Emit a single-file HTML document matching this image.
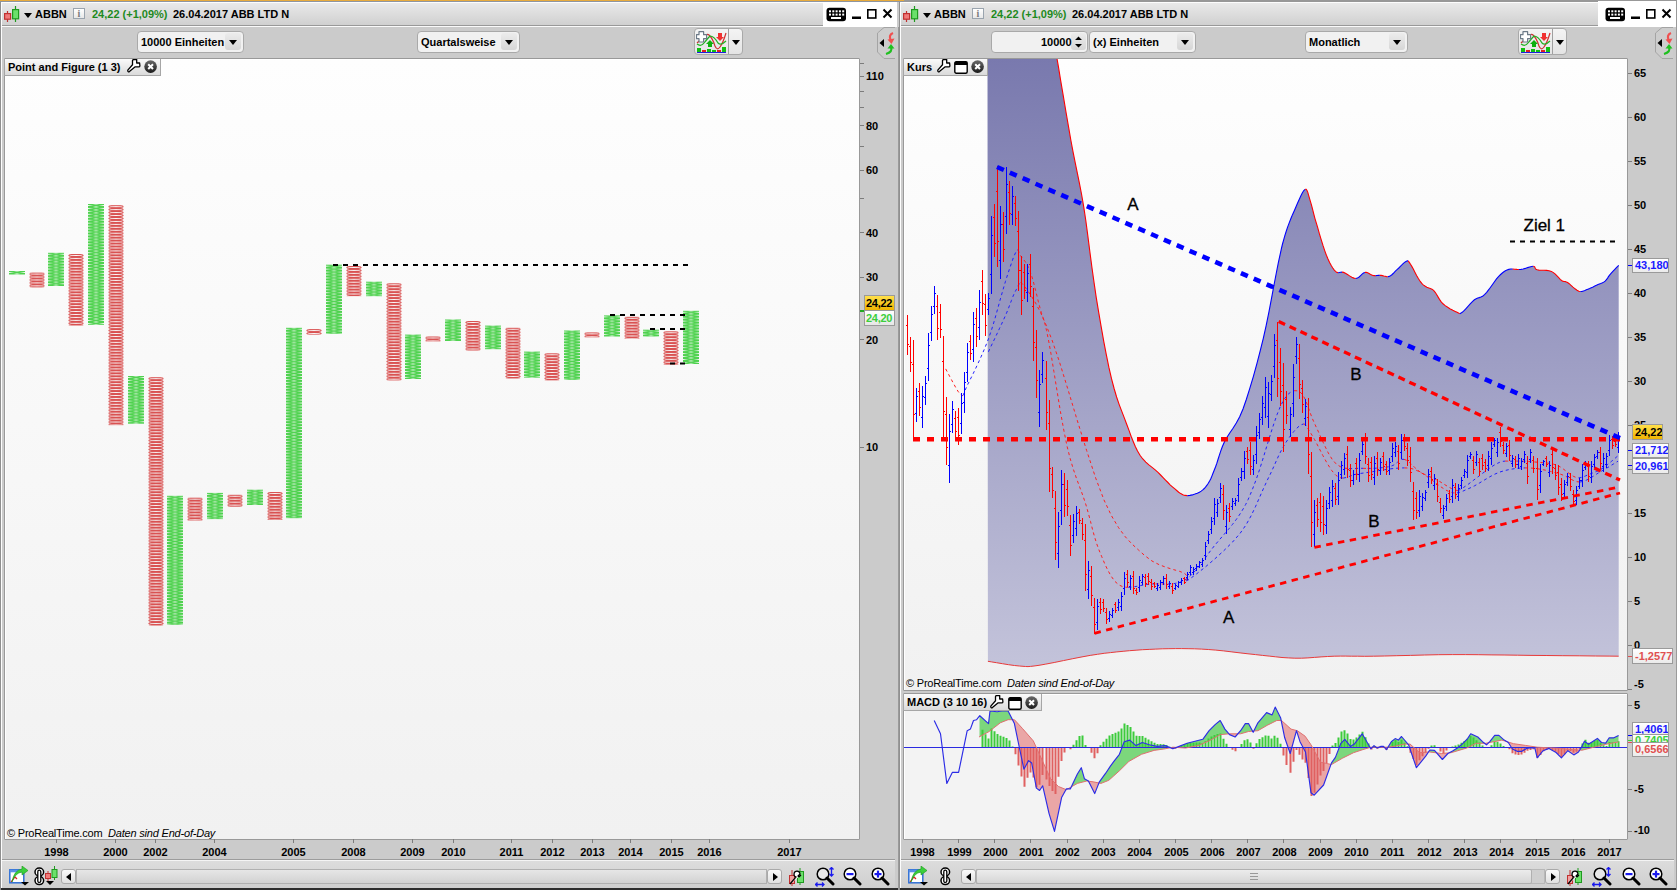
<!DOCTYPE html><html><head><meta charset="utf-8"><style>body{margin:0;width:1677px;height:890px;overflow:hidden;position:relative;background:#cbcbcb;font-family:"Liberation Sans", sans-serif;}div{box-sizing:border-box}svg{position:absolute;left:0;top:0}</style></head><body>
<div style="position:absolute;left:0px;top:0px;width:898px;height:890px;background:#cbcbcb"></div>
<div style="position:absolute;left:0px;top:0px;width:898px;height:2px;background:linear-gradient(#e8ab3c 50%,#8e95a0 50%)"></div>
<div style="position:absolute;left:1px;top:2px;width:822px;height:1px;background:#fdfdfd"></div>
<div style="position:absolute;left:1px;top:3px;width:822px;height:22px;background:linear-gradient(#e9e9e9,#d0d0d0)"></div>
<div style="position:absolute;left:1px;top:25px;width:896px;height:1px;background:#999"></div>
<div style="position:absolute;left:1px;top:26px;width:896px;height:1px;background:#fafafa"></div>
<div style="position:absolute;left:823px;top:1px;width:74px;height:26px;background:#fff"></div>
<div style="position:absolute;left:0px;top:888px;width:898px;height:2px;background:#2d2d2d"></div>
<div style="position:absolute;left:1px;top:859px;width:894px;height:1px;background:#9c9c9c"></div>
<div style="position:absolute;left:1px;top:860px;width:894px;height:1px;background:#f4f4f4"></div>
<div style="position:absolute;left:1px;top:861px;width:894px;height:27px;background:linear-gradient(#dcdcdc,#cfcfcf)"></div>
<div style="position:absolute;left:0px;top:0px;width:1px;height:890px;background:#8f8f8f"></div>
<div style="position:absolute;left:1px;top:2px;width:1px;height:886px;background:#fdfdfd"></div>
<div style="position:absolute;left:898px;top:27px;width:1px;height:863px;background:#9a9a9a"></div>
<div style="position:absolute;left:899px;top:1px;width:1px;height:889px;background:#909090"></div>
<div style="position:absolute;left:900px;top:0px;width:777px;height:890px;background:#cbcbcb"></div>
<div style="position:absolute;left:900px;top:0px;width:777px;height:2px;background:#989898"></div>
<div style="position:absolute;left:901px;top:2px;width:697px;height:1px;background:#fdfdfd"></div>
<div style="position:absolute;left:901px;top:3px;width:697px;height:22px;background:linear-gradient(#e9e9e9,#d0d0d0)"></div>
<div style="position:absolute;left:901px;top:25px;width:775px;height:1px;background:#999"></div>
<div style="position:absolute;left:901px;top:26px;width:775px;height:1px;background:#fafafa"></div>
<div style="position:absolute;left:1598px;top:1px;width:78px;height:26px;background:#fff"></div>
<div style="position:absolute;left:900px;top:888px;width:777px;height:2px;background:#2d2d2d"></div>
<div style="position:absolute;left:901px;top:859px;width:773px;height:1px;background:#9c9c9c"></div>
<div style="position:absolute;left:901px;top:860px;width:773px;height:1px;background:#f4f4f4"></div>
<div style="position:absolute;left:901px;top:861px;width:773px;height:27px;background:linear-gradient(#dcdcdc,#cfcfcf)"></div>
<div style="position:absolute;left:900px;top:2px;width:1px;height:886px;background:#fdfdfd"></div>
<div style="position:absolute;left:1676px;top:0px;width:1px;height:890px;background:#9a9a9a"></div>
<div style="position:absolute;left:0px;top:0px;width:904px;height:2px;background:linear-gradient(#e8ab3c 50%,#8e95a0 50%)"></div>
<div style="position:absolute;left:4px;top:58px;width:856px;height:782px;background:linear-gradient(#fefefe,#f1f1f1);border:1px solid #999;border-radius:1px;box-shadow:inset 1px 1px 0 #fff"></div>
<div style="position:absolute;left:903px;top:58px;width:725px;height:633px;background:linear-gradient(#fefefe,#f1f1f1);border:1px solid #999;border-radius:1px;box-shadow:inset 1px 1px 0 #fff"></div>
<div style="position:absolute;left:903px;top:693px;width:725px;height:147px;background:#f3f3f3;border:1px solid #999;border-radius:1px;box-shadow:inset 1px 1px 0 #fff"></div>
<svg style="left:0px;top:0px" width="20" height="24" viewBox="0 0 20 24"><path d="M7.5,11V22" stroke="#c03030" stroke-width="1.2"/><rect x="4.6" y="13.6" width="6" height="5.6" fill="#f07a7a" stroke="#c03030" stroke-width="1.2"/><path d="M15.5,6V22" stroke="#1f9a1f" stroke-width="1.2"/><rect x="12.6" y="9.6" width="6" height="9.2" fill="#6be06b" stroke="#1f9a1f" stroke-width="1.2"/></svg>
<svg style="left:24px;top:13px" width="8" height="5" viewBox="0 0 8 5"><path d="M0,0H8L4.0,5Z" fill="#000"/></svg>
<div style="position:absolute;left:35px;top:9px;font-size:11px;font-weight:bold;color:#000;white-space:nowrap;line-height:1;">ABBN</div>
<div style="position:absolute;left:73px;top:8px;width:12px;height:11px;border:1px solid #9aa4ae;background:linear-gradient(#fff,#e8e8e8);font-family:'Liberation Serif';font-weight:bold;font-size:10px;line-height:9px;text-align:center;color:#7a7a7a">i</div>
<div style="position:absolute;left:92px;top:9px;font-size:11px;font-weight:bold;color:#1e8a1e;white-space:nowrap;line-height:1;">24,22 (+1,09%)</div>
<div style="position:absolute;left:173px;top:9px;font-size:11px;font-weight:bold;color:#000;white-space:nowrap;line-height:1;">26.04.2017 ABB LTD N</div>
<svg style="left:826px;top:7px" width="68" height="16" viewBox="0 0 68 16"><rect x="0.5" y="0.8" width="19.5" height="13.5" rx="3" fill="#000"/><rect x="3.0" y="3.3" width="2" height="2" fill="#fff"/><rect x="3.0" y="6.6" width="2" height="2" fill="#fff"/><rect x="6.3" y="3.3" width="2" height="2" fill="#fff"/><rect x="6.3" y="6.6" width="2" height="2" fill="#fff"/><rect x="9.6" y="3.3" width="2" height="2" fill="#fff"/><rect x="9.6" y="6.6" width="2" height="2" fill="#fff"/><rect x="12.9" y="3.3" width="2" height="2" fill="#fff"/><rect x="12.9" y="6.6" width="2" height="2" fill="#fff"/><rect x="16.2" y="3.3" width="2" height="2" fill="#fff"/><rect x="16.2" y="6.6" width="2" height="2" fill="#fff"/><rect x="5" y="10" width="10" height="2" fill="#fff"/><rect x="26" y="9.5" width="9" height="2.5" fill="#000"/><rect x="41.8" y="2.8" width="8" height="8.2" fill="none" stroke="#000" stroke-width="1.6"/><path d="M57.5,2.5L65.5,10.5M65.5,2.5L57.5,10.5" stroke="#000" stroke-width="2"/></svg>
<svg style="left:899px;top:0px" width="20" height="24" viewBox="0 0 20 24"><path d="M7.5,11V22" stroke="#c03030" stroke-width="1.2"/><rect x="4.6" y="13.6" width="6" height="5.6" fill="#f07a7a" stroke="#c03030" stroke-width="1.2"/><path d="M15.5,6V22" stroke="#1f9a1f" stroke-width="1.2"/><rect x="12.6" y="9.6" width="6" height="9.2" fill="#6be06b" stroke="#1f9a1f" stroke-width="1.2"/></svg>
<svg style="left:923px;top:13px" width="8" height="5" viewBox="0 0 8 5"><path d="M0,0H8L4.0,5Z" fill="#000"/></svg>
<div style="position:absolute;left:934px;top:9px;font-size:11px;font-weight:bold;color:#000;white-space:nowrap;line-height:1;">ABBN</div>
<div style="position:absolute;left:972px;top:8px;width:12px;height:11px;border:1px solid #9aa4ae;background:linear-gradient(#fff,#e8e8e8);font-family:'Liberation Serif';font-weight:bold;font-size:10px;line-height:9px;text-align:center;color:#7a7a7a">i</div>
<div style="position:absolute;left:991px;top:9px;font-size:11px;font-weight:bold;color:#1e8a1e;white-space:nowrap;line-height:1;">24,22 (+1,09%)</div>
<div style="position:absolute;left:1072px;top:9px;font-size:11px;font-weight:bold;color:#000;white-space:nowrap;line-height:1;">26.04.2017 ABB LTD N</div>
<svg style="left:1605px;top:7px" width="68" height="16" viewBox="0 0 68 16"><rect x="0.5" y="0.8" width="19.5" height="13.5" rx="3" fill="#000"/><rect x="3.0" y="3.3" width="2" height="2" fill="#fff"/><rect x="3.0" y="6.6" width="2" height="2" fill="#fff"/><rect x="6.3" y="3.3" width="2" height="2" fill="#fff"/><rect x="6.3" y="6.6" width="2" height="2" fill="#fff"/><rect x="9.6" y="3.3" width="2" height="2" fill="#fff"/><rect x="9.6" y="6.6" width="2" height="2" fill="#fff"/><rect x="12.9" y="3.3" width="2" height="2" fill="#fff"/><rect x="12.9" y="6.6" width="2" height="2" fill="#fff"/><rect x="16.2" y="3.3" width="2" height="2" fill="#fff"/><rect x="16.2" y="6.6" width="2" height="2" fill="#fff"/><rect x="5" y="10" width="10" height="2" fill="#fff"/><rect x="26" y="9.5" width="9" height="2.5" fill="#000"/><rect x="41.8" y="2.8" width="8" height="8.2" fill="none" stroke="#000" stroke-width="1.6"/><path d="M57.5,2.5L65.5,10.5M65.5,2.5L57.5,10.5" stroke="#000" stroke-width="2"/></svg>
<div style="position:absolute;left:137px;top:31px;width:107px;height:22px;border:1px solid #a9a9a9;border-radius:4px;background:#f1f1f1"></div>
<div style="position:absolute;left:225px;top:33px;width:16px;height:17px;border-radius:3px;background:linear-gradient(#ececec,#d6d6d6)"></div>
<svg style="left:229px;top:40px" width="8" height="5" viewBox="0 0 8 5"><path d="M0,0H8L4.0,5Z" fill="#000"/></svg>
<div style="position:absolute;left:141px;top:37px;font-size:11px;font-weight:bold;color:#000;white-space:nowrap;line-height:1;">10000 Einheiten</div>
<div style="position:absolute;left:417px;top:31px;width:103px;height:22px;border:1px solid #a9a9a9;border-radius:4px;background:#f1f1f1"></div>
<div style="position:absolute;left:501px;top:33px;width:16px;height:17px;border-radius:3px;background:linear-gradient(#ececec,#d6d6d6)"></div>
<svg style="left:505px;top:40px" width="8" height="5" viewBox="0 0 8 5"><path d="M0,0H8L4.0,5Z" fill="#000"/></svg>
<div style="position:absolute;left:421px;top:37px;font-size:11px;font-weight:bold;color:#000;white-space:nowrap;line-height:1;">Quartalsweise</div>
<div style="position:absolute;left:694px;top:28px;width:49px;height:27px;border:1px solid #a9a9a9;border-radius:4px;background:linear-gradient(#f4f4f4,#e4e4e4)"></div>
<div style="position:absolute;left:728px;top:29px;width:1px;height:25px;background:#a0a0a0"></div>
<svg style="left:732px;top:40px" width="8" height="5" viewBox="0 0 8 5"><path d="M0,0H8L4.0,5Z" fill="#000"/></svg>
<svg style="left:696px;top:31px" width="31" height="22" viewBox="0 0 31 22"><path d="M1,12 Q5,8 8,6 Q11,2 13,4 Q17,8 19,15 Q21,20 24,16 Q27,12 30,2" fill="none" stroke="#d03030" stroke-width="1.2"/><path d="M1,13 Q5,16 8,12 Q12,7 14,5 Q18,5 22,12 Q25,15 30,10" fill="none" stroke="#20b020" stroke-width="1.2"/><path d="M12,16h4v-3h2l-4-4l-4,4h2z" fill="#10b010"/><path d="M22,2h4v4h2l-4,4l-4-4h2z" fill="#f03030"/><rect x="1" y="17" width="4" height="4" fill="#10c010"/><rect x="6" y="19" width="4" height="2" fill="#e02020"/><rect x="11" y="18" width="4" height="3" fill="#10c010"/><rect x="16" y="19" width="4" height="2" fill="#10c010"/><rect x="21" y="19" width="4" height="2" fill="#e02020"/><rect x="26" y="16" width="4" height="5" fill="#10c010"/><rect x="1" y="21" width="29" height="1.2" fill="#2020e0"/><path d="M3,0.7h4.6v3h3v4h-3v3.3h-4.6v-3.3h-2.5v-4h2.5z" fill="#fff" stroke="#6c7a88" stroke-width="1.2" stroke-linejoin="round"/></svg>
<svg style="left:876px;top:27px" width="19" height="32" viewBox="0 0 19 32"><path d="M19.5,0.5H8L1.5,6V25L8,31.5H19.5" fill="#cdcdcd" stroke="#a4a4a4" stroke-width="1"/><path d="M3.5,16L8,12V20Z" fill="#000"/><path d="M17,6 Q12,8 15,14" fill="none" stroke="#f05050" stroke-width="2.2"/><path d="M11.5,12.5L15.5,17L18.5,11.5Z" fill="#f05050"/><path d="M15,17 L11.5,21.5 L18.5,21.5Z" fill="#20c020"/><path d="M15,20 Q17,25 10,27" fill="none" stroke="#20c020" stroke-width="2.2"/></svg>
<div style="position:absolute;left:991px;top:31px;width:97px;height:22px;border:1px solid #a9a9a9;border-radius:4px;background:#f1f1f1"></div>
<div style="position:absolute;left:1071px;top:33px;width:15px;height:17px;border-radius:3px;background:linear-gradient(#ececec,#d6d6d6)"></div>
<svg style="left:1074px;top:35px" width="9" height="14" viewBox="0 0 9 14"><path d="M1,5H8L4.5,1.5Z M1,9H8L4.5,12.5Z" fill="#000"/></svg>
<div style="position:absolute;left:1041px;top:37px;font-size:11px;font-weight:bold;color:#000;white-space:nowrap;line-height:1;">10000</div>
<div style="position:absolute;left:1089px;top:31px;width:107px;height:22px;border:1px solid #a9a9a9;border-radius:4px;background:#f1f1f1"></div>
<div style="position:absolute;left:1177px;top:33px;width:16px;height:17px;border-radius:3px;background:linear-gradient(#ececec,#d6d6d6)"></div>
<svg style="left:1181px;top:40px" width="8" height="5" viewBox="0 0 8 5"><path d="M0,0H8L4.0,5Z" fill="#000"/></svg>
<div style="position:absolute;left:1093px;top:37px;font-size:11px;font-weight:bold;color:#000;white-space:nowrap;line-height:1;">(x) Einheiten</div>
<div style="position:absolute;left:1305px;top:31px;width:103px;height:22px;border:1px solid #a9a9a9;border-radius:4px;background:#f1f1f1"></div>
<div style="position:absolute;left:1389px;top:33px;width:16px;height:17px;border-radius:3px;background:linear-gradient(#ececec,#d6d6d6)"></div>
<svg style="left:1393px;top:40px" width="8" height="5" viewBox="0 0 8 5"><path d="M0,0H8L4.0,5Z" fill="#000"/></svg>
<div style="position:absolute;left:1309px;top:37px;font-size:11px;font-weight:bold;color:#000;white-space:nowrap;line-height:1;">Monatlich</div>
<div style="position:absolute;left:1518px;top:28px;width:49px;height:27px;border:1px solid #a9a9a9;border-radius:4px;background:linear-gradient(#f4f4f4,#e4e4e4)"></div>
<div style="position:absolute;left:1552px;top:29px;width:1px;height:25px;background:#a0a0a0"></div>
<svg style="left:1556px;top:40px" width="8" height="5" viewBox="0 0 8 5"><path d="M0,0H8L4.0,5Z" fill="#000"/></svg>
<svg style="left:1520px;top:31px" width="31" height="22" viewBox="0 0 31 22"><path d="M1,12 Q5,8 8,6 Q11,2 13,4 Q17,8 19,15 Q21,20 24,16 Q27,12 30,2" fill="none" stroke="#d03030" stroke-width="1.2"/><path d="M1,13 Q5,16 8,12 Q12,7 14,5 Q18,5 22,12 Q25,15 30,10" fill="none" stroke="#20b020" stroke-width="1.2"/><path d="M12,16h4v-3h2l-4-4l-4,4h2z" fill="#10b010"/><path d="M22,2h4v4h2l-4,4l-4-4h2z" fill="#f03030"/><rect x="1" y="17" width="4" height="4" fill="#10c010"/><rect x="6" y="19" width="4" height="2" fill="#e02020"/><rect x="11" y="18" width="4" height="3" fill="#10c010"/><rect x="16" y="19" width="4" height="2" fill="#10c010"/><rect x="21" y="19" width="4" height="2" fill="#e02020"/><rect x="26" y="16" width="4" height="5" fill="#10c010"/><rect x="1" y="21" width="29" height="1.2" fill="#2020e0"/><path d="M3,0.7h4.6v3h3v4h-3v3.3h-4.6v-3.3h-2.5v-4h2.5z" fill="#fff" stroke="#6c7a88" stroke-width="1.2" stroke-linejoin="round"/></svg>
<svg style="left:1654px;top:27px" width="19" height="32" viewBox="0 0 19 32"><path d="M19.5,0.5H8L1.5,6V25L8,31.5H19.5" fill="#cdcdcd" stroke="#a4a4a4" stroke-width="1"/><path d="M3.5,16L8,12V20Z" fill="#000"/><path d="M17,6 Q12,8 15,14" fill="none" stroke="#f05050" stroke-width="2.2"/><path d="M11.5,12.5L15.5,17L18.5,11.5Z" fill="#f05050"/><path d="M15,17 L11.5,21.5 L18.5,21.5Z" fill="#20c020"/><path d="M15,20 Q17,25 10,27" fill="none" stroke="#20c020" stroke-width="2.2"/></svg>
<div style="position:absolute;left:860px;top:63px;width:4px;height:1px;background:#7c7c7c"></div>
<div style="position:absolute;left:860px;top:76px;width:4px;height:1px;background:#7c7c7c"></div>
<div style="position:absolute;left:866px;top:71px;font-size:11px;font-weight:bold;color:#000;white-space:nowrap;line-height:1;">110</div>
<div style="position:absolute;left:860px;top:91px;width:4px;height:1px;background:#7c7c7c"></div>
<div style="position:absolute;left:860px;top:107px;width:4px;height:1px;background:#7c7c7c"></div>
<div style="position:absolute;left:860px;top:125px;width:4px;height:1px;background:#7c7c7c"></div>
<div style="position:absolute;left:866px;top:121px;font-size:11px;font-weight:bold;color:#000;white-space:nowrap;line-height:1;">80</div>
<div style="position:absolute;left:860px;top:146px;width:4px;height:1px;background:#7c7c7c"></div>
<div style="position:absolute;left:860px;top:170px;width:4px;height:1px;background:#7c7c7c"></div>
<div style="position:absolute;left:866px;top:165px;font-size:11px;font-weight:bold;color:#000;white-space:nowrap;line-height:1;">60</div>
<div style="position:absolute;left:860px;top:198px;width:4px;height:1px;background:#7c7c7c"></div>
<div style="position:absolute;left:860px;top:232px;width:4px;height:1px;background:#7c7c7c"></div>
<div style="position:absolute;left:866px;top:228px;font-size:11px;font-weight:bold;color:#000;white-space:nowrap;line-height:1;">40</div>
<div style="position:absolute;left:860px;top:277px;width:4px;height:1px;background:#7c7c7c"></div>
<div style="position:absolute;left:866px;top:272px;font-size:11px;font-weight:bold;color:#000;white-space:nowrap;line-height:1;">30</div>
<div style="position:absolute;left:860px;top:339px;width:4px;height:1px;background:#7c7c7c"></div>
<div style="position:absolute;left:866px;top:335px;font-size:11px;font-weight:bold;color:#000;white-space:nowrap;line-height:1;">20</div>
<div style="position:absolute;left:860px;top:447px;width:4px;height:1px;background:#7c7c7c"></div>
<div style="position:absolute;left:866px;top:442px;font-size:11px;font-weight:bold;color:#000;white-space:nowrap;line-height:1;">10</div>
<div style="position:absolute;left:860px;top:310px;width:4px;height:2px;background:#22aa22"></div>
<div style="position:absolute;left:864px;top:295px;width:31px;height:16px;border:1px solid #9a9a9a;background:linear-gradient(#ffe04a,#f0b400);font-size:11px;font-weight:bold;line-height:14px;padding-left:1px;letter-spacing:-0.3px;color:#000">24,22</div>
<div style="position:absolute;left:864px;top:310px;width:31px;height:16px;border:1px solid #9a9a9a;background:linear-gradient(#ffffff,#e6e6e6);font-size:11px;font-weight:bold;line-height:14px;padding-left:1px;letter-spacing:-0.3px;color:#3ccf3c">24,20</div>
<div style="position:absolute;left:56px;top:839px;width:1px;height:4px;background:#7c7c7c"></div>
<div style="position:absolute;left:26px;top:847px;width:61px;text-align:center;font-size:11px;font-weight:bold;line-height:1">1998</div>
<div style="position:absolute;left:115px;top:839px;width:1px;height:4px;background:#7c7c7c"></div>
<div style="position:absolute;left:85px;top:847px;width:61px;text-align:center;font-size:11px;font-weight:bold;line-height:1">2000</div>
<div style="position:absolute;left:155px;top:839px;width:1px;height:4px;background:#7c7c7c"></div>
<div style="position:absolute;left:125px;top:847px;width:61px;text-align:center;font-size:11px;font-weight:bold;line-height:1">2002</div>
<div style="position:absolute;left:214px;top:839px;width:1px;height:4px;background:#7c7c7c"></div>
<div style="position:absolute;left:184px;top:847px;width:61px;text-align:center;font-size:11px;font-weight:bold;line-height:1">2004</div>
<div style="position:absolute;left:293px;top:839px;width:1px;height:4px;background:#7c7c7c"></div>
<div style="position:absolute;left:263px;top:847px;width:61px;text-align:center;font-size:11px;font-weight:bold;line-height:1">2005</div>
<div style="position:absolute;left:353px;top:839px;width:1px;height:4px;background:#7c7c7c"></div>
<div style="position:absolute;left:323px;top:847px;width:61px;text-align:center;font-size:11px;font-weight:bold;line-height:1">2008</div>
<div style="position:absolute;left:412px;top:839px;width:1px;height:4px;background:#7c7c7c"></div>
<div style="position:absolute;left:382px;top:847px;width:61px;text-align:center;font-size:11px;font-weight:bold;line-height:1">2009</div>
<div style="position:absolute;left:453px;top:839px;width:1px;height:4px;background:#7c7c7c"></div>
<div style="position:absolute;left:423px;top:847px;width:61px;text-align:center;font-size:11px;font-weight:bold;line-height:1">2010</div>
<div style="position:absolute;left:511px;top:839px;width:1px;height:4px;background:#7c7c7c"></div>
<div style="position:absolute;left:481px;top:847px;width:61px;text-align:center;font-size:11px;font-weight:bold;line-height:1">2011</div>
<div style="position:absolute;left:552px;top:839px;width:1px;height:4px;background:#7c7c7c"></div>
<div style="position:absolute;left:522px;top:847px;width:61px;text-align:center;font-size:11px;font-weight:bold;line-height:1">2012</div>
<div style="position:absolute;left:592px;top:839px;width:1px;height:4px;background:#7c7c7c"></div>
<div style="position:absolute;left:562px;top:847px;width:61px;text-align:center;font-size:11px;font-weight:bold;line-height:1">2013</div>
<div style="position:absolute;left:630px;top:839px;width:1px;height:4px;background:#7c7c7c"></div>
<div style="position:absolute;left:600px;top:847px;width:61px;text-align:center;font-size:11px;font-weight:bold;line-height:1">2014</div>
<div style="position:absolute;left:671px;top:839px;width:1px;height:4px;background:#7c7c7c"></div>
<div style="position:absolute;left:641px;top:847px;width:61px;text-align:center;font-size:11px;font-weight:bold;line-height:1">2015</div>
<div style="position:absolute;left:709px;top:839px;width:1px;height:4px;background:#7c7c7c"></div>
<div style="position:absolute;left:679px;top:847px;width:61px;text-align:center;font-size:11px;font-weight:bold;line-height:1">2016</div>
<div style="position:absolute;left:789px;top:839px;width:1px;height:4px;background:#7c7c7c"></div>
<div style="position:absolute;left:759px;top:847px;width:61px;text-align:center;font-size:11px;font-weight:bold;line-height:1">2017</div>
<div style="position:absolute;left:922px;top:839px;width:1px;height:4px;background:#7c7c7c"></div>
<div style="position:absolute;left:892px;top:847px;width:61px;text-align:center;font-size:11px;font-weight:bold;line-height:1">1998</div>
<div style="position:absolute;left:958px;top:839px;width:1px;height:4px;background:#7c7c7c"></div>
<div style="position:absolute;left:929px;top:847px;width:61px;text-align:center;font-size:11px;font-weight:bold;line-height:1">1999</div>
<div style="position:absolute;left:994px;top:839px;width:1px;height:4px;background:#7c7c7c"></div>
<div style="position:absolute;left:965px;top:847px;width:61px;text-align:center;font-size:11px;font-weight:bold;line-height:1">2000</div>
<div style="position:absolute;left:1030px;top:839px;width:1px;height:4px;background:#7c7c7c"></div>
<div style="position:absolute;left:1001px;top:847px;width:61px;text-align:center;font-size:11px;font-weight:bold;line-height:1">2001</div>
<div style="position:absolute;left:1067px;top:839px;width:1px;height:4px;background:#7c7c7c"></div>
<div style="position:absolute;left:1037px;top:847px;width:61px;text-align:center;font-size:11px;font-weight:bold;line-height:1">2002</div>
<div style="position:absolute;left:1103px;top:839px;width:1px;height:4px;background:#7c7c7c"></div>
<div style="position:absolute;left:1073px;top:847px;width:61px;text-align:center;font-size:11px;font-weight:bold;line-height:1">2003</div>
<div style="position:absolute;left:1139px;top:839px;width:1px;height:4px;background:#7c7c7c"></div>
<div style="position:absolute;left:1109px;top:847px;width:61px;text-align:center;font-size:11px;font-weight:bold;line-height:1">2004</div>
<div style="position:absolute;left:1175px;top:839px;width:1px;height:4px;background:#7c7c7c"></div>
<div style="position:absolute;left:1146px;top:847px;width:61px;text-align:center;font-size:11px;font-weight:bold;line-height:1">2005</div>
<div style="position:absolute;left:1211px;top:839px;width:1px;height:4px;background:#7c7c7c"></div>
<div style="position:absolute;left:1182px;top:847px;width:61px;text-align:center;font-size:11px;font-weight:bold;line-height:1">2006</div>
<div style="position:absolute;left:1247px;top:839px;width:1px;height:4px;background:#7c7c7c"></div>
<div style="position:absolute;left:1218px;top:847px;width:61px;text-align:center;font-size:11px;font-weight:bold;line-height:1">2007</div>
<div style="position:absolute;left:1283px;top:839px;width:1px;height:4px;background:#7c7c7c"></div>
<div style="position:absolute;left:1254px;top:847px;width:61px;text-align:center;font-size:11px;font-weight:bold;line-height:1">2008</div>
<div style="position:absolute;left:1320px;top:839px;width:1px;height:4px;background:#7c7c7c"></div>
<div style="position:absolute;left:1290px;top:847px;width:61px;text-align:center;font-size:11px;font-weight:bold;line-height:1">2009</div>
<div style="position:absolute;left:1356px;top:839px;width:1px;height:4px;background:#7c7c7c"></div>
<div style="position:absolute;left:1326px;top:847px;width:61px;text-align:center;font-size:11px;font-weight:bold;line-height:1">2010</div>
<div style="position:absolute;left:1392px;top:839px;width:1px;height:4px;background:#7c7c7c"></div>
<div style="position:absolute;left:1362px;top:847px;width:61px;text-align:center;font-size:11px;font-weight:bold;line-height:1">2011</div>
<div style="position:absolute;left:1428px;top:839px;width:1px;height:4px;background:#7c7c7c"></div>
<div style="position:absolute;left:1399px;top:847px;width:61px;text-align:center;font-size:11px;font-weight:bold;line-height:1">2012</div>
<div style="position:absolute;left:1464px;top:839px;width:1px;height:4px;background:#7c7c7c"></div>
<div style="position:absolute;left:1435px;top:847px;width:61px;text-align:center;font-size:11px;font-weight:bold;line-height:1">2013</div>
<div style="position:absolute;left:1500px;top:839px;width:1px;height:4px;background:#7c7c7c"></div>
<div style="position:absolute;left:1471px;top:847px;width:61px;text-align:center;font-size:11px;font-weight:bold;line-height:1">2014</div>
<div style="position:absolute;left:1536px;top:839px;width:1px;height:4px;background:#7c7c7c"></div>
<div style="position:absolute;left:1507px;top:847px;width:61px;text-align:center;font-size:11px;font-weight:bold;line-height:1">2015</div>
<div style="position:absolute;left:1573px;top:839px;width:1px;height:4px;background:#7c7c7c"></div>
<div style="position:absolute;left:1543px;top:847px;width:61px;text-align:center;font-size:11px;font-weight:bold;line-height:1">2016</div>
<div style="position:absolute;left:1609px;top:839px;width:1px;height:4px;background:#7c7c7c"></div>
<div style="position:absolute;left:1579px;top:847px;width:61px;text-align:center;font-size:11px;font-weight:bold;line-height:1">2017</div>
<div style="position:absolute;left:1628px;top:73px;width:4px;height:1px;background:#7c7c7c"></div>
<div style="position:absolute;left:1634px;top:68px;font-size:11px;font-weight:bold;color:#000;white-space:nowrap;line-height:1;">65</div>
<div style="position:absolute;left:1628px;top:117px;width:4px;height:1px;background:#7c7c7c"></div>
<div style="position:absolute;left:1634px;top:112px;font-size:11px;font-weight:bold;color:#000;white-space:nowrap;line-height:1;">60</div>
<div style="position:absolute;left:1628px;top:161px;width:4px;height:1px;background:#7c7c7c"></div>
<div style="position:absolute;left:1634px;top:156px;font-size:11px;font-weight:bold;color:#000;white-space:nowrap;line-height:1;">55</div>
<div style="position:absolute;left:1628px;top:205px;width:4px;height:1px;background:#7c7c7c"></div>
<div style="position:absolute;left:1634px;top:200px;font-size:11px;font-weight:bold;color:#000;white-space:nowrap;line-height:1;">50</div>
<div style="position:absolute;left:1628px;top:249px;width:4px;height:1px;background:#7c7c7c"></div>
<div style="position:absolute;left:1634px;top:244px;font-size:11px;font-weight:bold;color:#000;white-space:nowrap;line-height:1;">45</div>
<div style="position:absolute;left:1628px;top:293px;width:4px;height:1px;background:#7c7c7c"></div>
<div style="position:absolute;left:1634px;top:288px;font-size:11px;font-weight:bold;color:#000;white-space:nowrap;line-height:1;">40</div>
<div style="position:absolute;left:1628px;top:337px;width:4px;height:1px;background:#7c7c7c"></div>
<div style="position:absolute;left:1634px;top:332px;font-size:11px;font-weight:bold;color:#000;white-space:nowrap;line-height:1;">35</div>
<div style="position:absolute;left:1628px;top:381px;width:4px;height:1px;background:#7c7c7c"></div>
<div style="position:absolute;left:1634px;top:376px;font-size:11px;font-weight:bold;color:#000;white-space:nowrap;line-height:1;">30</div>
<div style="position:absolute;left:1628px;top:425px;width:4px;height:1px;background:#7c7c7c"></div>
<div style="position:absolute;left:1628px;top:469px;width:4px;height:1px;background:#7c7c7c"></div>
<div style="position:absolute;left:1628px;top:513px;width:4px;height:1px;background:#7c7c7c"></div>
<div style="position:absolute;left:1634px;top:508px;font-size:11px;font-weight:bold;color:#000;white-space:nowrap;line-height:1;">15</div>
<div style="position:absolute;left:1628px;top:557px;width:4px;height:1px;background:#7c7c7c"></div>
<div style="position:absolute;left:1634px;top:552px;font-size:11px;font-weight:bold;color:#000;white-space:nowrap;line-height:1;">10</div>
<div style="position:absolute;left:1628px;top:601px;width:4px;height:1px;background:#7c7c7c"></div>
<div style="position:absolute;left:1634px;top:596px;font-size:11px;font-weight:bold;color:#000;white-space:nowrap;line-height:1;">5</div>
<div style="position:absolute;left:1628px;top:645px;width:4px;height:1px;background:#7c7c7c"></div>
<div style="position:absolute;left:1634px;top:640px;font-size:11px;font-weight:bold;color:#000;white-space:nowrap;line-height:1;">0</div>
<div style="position:absolute;left:1628px;top:689px;width:4px;height:1px;background:#7c7c7c"></div>
<div style="position:absolute;left:1634px;top:679px;font-size:11px;font-weight:bold;color:#000;white-space:nowrap;line-height:1;">-5</div>
<div style="position:absolute;left:1634px;top:420px;font-size:11px;font-weight:bold;color:#000;white-space:nowrap;line-height:1;">25</div>
<div style="position:absolute;left:1628px;top:265px;width:4px;height:1px;background:#0000ff"></div>
<div style="position:absolute;left:1632px;top:258px;width:37px;height:15px;border:1px solid #9a9a9a;background:linear-gradient(#ffffff,#ebebeb);font-size:11px;font-weight:bold;line-height:13px;padding-left:2px;color:#1a1aff;overflow:hidden">43,180</div>
<div style="position:absolute;left:1632px;top:424px;width:31px;height:16px;border:1px solid #9a9a9a;background:linear-gradient(#ffe04a,#f0b400);font-size:11px;font-weight:bold;line-height:14px;padding-left:2px;color:#000;overflow:hidden">24,22</div>
<div style="position:absolute;left:1628px;top:450px;width:4px;height:1px;background:#0000ff"></div>
<div style="position:absolute;left:1628px;top:465px;width:4px;height:1px;background:#0000ff"></div>
<div style="position:absolute;left:1632px;top:443px;width:37px;height:15px;border:1px solid #9a9a9a;background:linear-gradient(#ffffff,#ebebeb);font-size:11px;font-weight:bold;line-height:13px;padding-left:2px;color:#1a1aff;overflow:hidden">21,712</div>
<div style="position:absolute;left:1632px;top:458px;width:37px;height:16px;border:1px solid #9a9a9a;background:linear-gradient(#ffffff,#ebebeb);font-size:11px;font-weight:bold;line-height:14px;padding-left:2px;color:#1a1aff;overflow:hidden">20,961</div>
<div style="position:absolute;left:1632px;top:648px;width:41px;height:16px;border:1px solid #9a9a9a;background:linear-gradient(#ffffff,#ebebeb);font-size:11px;font-weight:bold;line-height:14px;padding-left:2px;color:#e05050;overflow:hidden">-1,2577</div>
<div style="position:absolute;left:1628px;top:656px;width:4px;height:1px;background:#e05050"></div>
<div style="position:absolute;left:1628px;top:705px;width:4px;height:1px;background:#7c7c7c"></div>
<div style="position:absolute;left:1634px;top:700px;font-size:11px;font-weight:bold;color:#000;white-space:nowrap;line-height:1;">5</div>
<div style="position:absolute;left:1628px;top:789px;width:4px;height:1px;background:#7c7c7c"></div>
<div style="position:absolute;left:1634px;top:784px;font-size:11px;font-weight:bold;color:#000;white-space:nowrap;line-height:1;">-5</div>
<div style="position:absolute;left:1628px;top:831px;width:4px;height:1px;background:#7c7c7c"></div>
<div style="position:absolute;left:1634px;top:825px;font-size:11px;font-weight:bold;color:#000;white-space:nowrap;line-height:1;">-10</div>
<div style="position:absolute;left:1628px;top:735px;width:4px;height:1px;background:#0000ff"></div>
<div style="position:absolute;left:1628px;top:740px;width:4px;height:1px;background:#3ccf3c"></div>
<div style="position:absolute;left:1628px;top:742px;width:4px;height:1px;background:#e05050"></div>
<div style="position:absolute;left:1632px;top:722px;width:37px;height:14px;border:1px solid #9a9a9a;background:linear-gradient(#ffffff,#ebebeb);font-size:11px;font-weight:bold;line-height:12px;padding-left:2px;color:#1a1aff;overflow:hidden">1,4061</div>
<div style="position:absolute;left:1632px;top:734px;width:37px;height:12px;border:1px solid #9a9a9a;background:linear-gradient(#ffffff,#ebebeb);font-size:11px;font-weight:bold;line-height:10px;padding-left:2px;color:#3ccf3c;overflow:hidden">0,7405</div>
<div style="position:absolute;left:1632px;top:742px;width:37px;height:15px;border:1px solid #9a9a9a;background:linear-gradient(#ffffff,#ebebeb);font-size:11px;font-weight:bold;line-height:13px;padding-left:2px;color:#e05050;overflow:hidden">0,6566</div>
<svg style="left:9px;top:866px" width="20" height="20" viewBox="0 0 20 20"><rect x="0.8" y="3.8" width="14" height="13" fill="#fff" stroke="#2f6fd6" stroke-width="1.5"/><rect x="0.8" y="3.8" width="14" height="2.5" fill="#5a8fe6"/><path d="M2,16L6,11L8,13" fill="none" stroke="#e02020" stroke-width="1.2"/><path d="M3,16 Q6,7 13,6 L13,9 L19,4.5 L13,0 L13,3 Q5,4 3,16Z" fill="#3ccf3c" stroke="#1a9a1a" stroke-width="0.6"/><path d="M12,16H20L16,19.5Z" fill="#000"/></svg>
<svg style="left:34px;top:867px" width="11" height="19" viewBox="0 0 11 19"><rect x="1" y="1" width="8.6" height="8" rx="4.2" fill="#fff" stroke="#000" stroke-width="1.5"/><rect x="1" y="9.6" width="8.6" height="8" rx="4.2" fill="#fff" stroke="#000" stroke-width="1.5"/><rect x="3.8" y="3.2" width="3" height="12.2" rx="1.5" fill="#fff" stroke="#000" stroke-width="1.3"/></svg>
<svg style="left:45px;top:866px" width="13" height="20" viewBox="0 0 13 20"><path d="M3,5V15" stroke="#c03030" stroke-width="1"/><rect x="0.5" y="7.5" width="5" height="5" fill="#f07a7a" stroke="#c03030"/><path d="M9.5,0V14" stroke="#1f9a1f" stroke-width="1"/><rect x="7" y="3.5" width="5" height="8" fill="#6be06b" stroke="#1f9a1f"/><path d="M1,15H9L5,19Z" fill="#000"/></svg>
<div style="position:absolute;left:61px;top:869px;width:15px;height:15px;border:1px solid #a9a9a9;border-radius:3px;background:linear-gradient(#fafafa,#e0e0e0)"></div>
<svg style="left:66px;top:873px" width="5" height="8" viewBox="0 0 5 8"><path d="M5,0V8L0,4Z" fill="#000"/></svg>
<div style="position:absolute;left:76px;top:869px;width:691px;height:15px;border:1px solid #b0b0b0;background:linear-gradient(#e6e6e6,#d2d2d2)"></div>
<div style="position:absolute;left:767px;top:869px;width:15px;height:15px;border:1px solid #a9a9a9;border-radius:3px;background:linear-gradient(#fafafa,#e0e0e0)"></div>
<svg style="left:773px;top:873px" width="5" height="8" viewBox="0 0 5 8"><path d="M0,0V8L5,4Z" fill="#000"/></svg>
<svg style="left:788px;top:867px" width="17" height="20" viewBox="0 0 17 20"><path d="M4,3V19" stroke="#c03030"/><rect x="1.5" y="8.5" width="5" height="8" fill="#f0a0a0" stroke="#c03030"/><path d="M12,1V18" stroke="#1f9a1f"/><rect x="9.5" y="4.5" width="6" height="11" fill="#6be06b" stroke="#1f9a1f"/><path d="M2,17L8,10 A3,3 0 1 1 12,7 L10,9 L11,10 L13,8" fill="#fff" stroke="#000" stroke-width="1.2"/></svg>
<svg style="left:815px;top:867px" width="20" height="20" viewBox="0 0 20 20"><circle cx="8" cy="7" r="5.8" fill="#e8e8e8" stroke="#000" stroke-width="1.5"/><path d="M12,11L18,17" stroke="#000" stroke-width="3" stroke-linecap="round"/><path d="M16.5,0.5V9M14.5,2.5L16.5,0.5L18.5,2.5M14.5,7L16.5,9L18.5,7" fill="none" stroke="#1a1aee" stroke-width="1.3"/><path d="M0.5,17.5H9M2.5,15.5L0.5,17.5L2.5,19.5M7,15.5L9,17.5L7,19.5" fill="none" stroke="#1a1aee" stroke-width="1.3"/></svg>
<svg style="left:843px;top:867px" width="19" height="19" viewBox="0 0 19 19"><circle cx="7" cy="7" r="5.8" fill="#fff" stroke="#000" stroke-width="1.5"/><rect x="3.5" y="6" width="7" height="2.2" fill="#1a1aee"/><path d="M11,11L17,17" stroke="#000" stroke-width="3" stroke-linecap="round"/></svg>
<svg style="left:871px;top:867px" width="19" height="19" viewBox="0 0 19 19"><circle cx="7" cy="7" r="5.8" fill="#fff" stroke="#000" stroke-width="1.5"/><rect x="3.5" y="6" width="7" height="2.2" fill="#1a1aee"/><rect x="5.9" y="3.6" width="2.2" height="7" fill="#1a1aee"/><path d="M11,11L17,17" stroke="#000" stroke-width="3" stroke-linecap="round"/></svg>
<svg style="left:908px;top:866px" width="20" height="20" viewBox="0 0 20 20"><rect x="0.8" y="3.8" width="14" height="13" fill="#fff" stroke="#2f6fd6" stroke-width="1.5"/><rect x="0.8" y="3.8" width="14" height="2.5" fill="#5a8fe6"/><path d="M2,16L6,11L8,13" fill="none" stroke="#e02020" stroke-width="1.2"/><path d="M3,16 Q6,7 13,6 L13,9 L19,4.5 L13,0 L13,3 Q5,4 3,16Z" fill="#3ccf3c" stroke="#1a9a1a" stroke-width="0.6"/><path d="M12,16H20L16,19.5Z" fill="#000"/></svg>
<svg style="left:940px;top:867px" width="11" height="19" viewBox="0 0 11 19"><rect x="1" y="1" width="8.6" height="8" rx="4.2" fill="#fff" stroke="#000" stroke-width="1.5"/><rect x="1" y="9.6" width="8.6" height="8" rx="4.2" fill="#fff" stroke="#000" stroke-width="1.5"/><rect x="3.8" y="3.2" width="3" height="12.2" rx="1.5" fill="#fff" stroke="#000" stroke-width="1.3"/></svg>
<div style="position:absolute;left:961px;top:869px;width:15px;height:15px;border:1px solid #a9a9a9;border-radius:3px;background:linear-gradient(#fafafa,#e0e0e0)"></div>
<svg style="left:966px;top:873px" width="5" height="8" viewBox="0 0 5 8"><path d="M5,0V8L0,4Z" fill="#000"/></svg>
<div style="position:absolute;left:976px;top:869px;width:569px;height:15px;border:1px solid #b8b8b8;background:#cfcfcf"></div>
<div style="position:absolute;left:976px;top:869px;width:556px;height:15px;border:1px solid #b0b0b0;border-radius:2px;background:linear-gradient(#ececec,#d6d6d6)"></div>
<div style="position:absolute;left:1250px;top:873px;width:8px;height:7px;border-top:1px solid #999;border-bottom:1px solid #999"></div><div style="position:absolute;left:1250px;top:876px;width:8px;height:1px;background:#999"></div>
<div style="position:absolute;left:1545px;top:869px;width:15px;height:15px;border:1px solid #a9a9a9;border-radius:3px;background:linear-gradient(#fafafa,#e0e0e0)"></div>
<svg style="left:1551px;top:873px" width="5" height="8" viewBox="0 0 5 8"><path d="M0,0V8L5,4Z" fill="#000"/></svg>
<svg style="left:1566px;top:867px" width="17" height="20" viewBox="0 0 17 20"><path d="M4,3V19" stroke="#c03030"/><rect x="1.5" y="8.5" width="5" height="8" fill="#f0a0a0" stroke="#c03030"/><path d="M12,1V18" stroke="#1f9a1f"/><rect x="9.5" y="4.5" width="6" height="11" fill="#6be06b" stroke="#1f9a1f"/><path d="M2,17L8,10 A3,3 0 1 1 12,7 L10,9 L11,10 L13,8" fill="#fff" stroke="#000" stroke-width="1.2"/></svg>
<svg style="left:1592px;top:867px" width="20" height="20" viewBox="0 0 20 20"><circle cx="8" cy="7" r="5.8" fill="#e8e8e8" stroke="#000" stroke-width="1.5"/><path d="M12,11L18,17" stroke="#000" stroke-width="3" stroke-linecap="round"/><path d="M16.5,0.5V9M14.5,2.5L16.5,0.5L18.5,2.5M14.5,7L16.5,9L18.5,7" fill="none" stroke="#1a1aee" stroke-width="1.3"/><path d="M0.5,17.5H9M2.5,15.5L0.5,17.5L2.5,19.5M7,15.5L9,17.5L7,19.5" fill="none" stroke="#1a1aee" stroke-width="1.3"/></svg>
<svg style="left:1622px;top:867px" width="19" height="19" viewBox="0 0 19 19"><circle cx="7" cy="7" r="5.8" fill="#fff" stroke="#000" stroke-width="1.5"/><rect x="3.5" y="6" width="7" height="2.2" fill="#1a1aee"/><path d="M11,11L17,17" stroke="#000" stroke-width="3" stroke-linecap="round"/></svg>
<svg style="left:1649px;top:867px" width="19" height="19" viewBox="0 0 19 19"><circle cx="7" cy="7" r="5.8" fill="#fff" stroke="#000" stroke-width="1.5"/><rect x="3.5" y="6" width="7" height="2.2" fill="#1a1aee"/><rect x="5.9" y="3.6" width="2.2" height="7" fill="#1a1aee"/><path d="M11,11L17,17" stroke="#000" stroke-width="3" stroke-linecap="round"/></svg>
<svg width="1677" height="890" viewBox="0 0 1677 890" style="font-family:'Liberation Sans', sans-serif">
<defs>
<pattern id="pO" patternUnits="userSpaceOnUse" width="16" height="2.95"><ellipse cx="8" cy="1.475" rx="7.2" ry="1.1" fill="none" stroke="#d95252" stroke-width="1.15"/></pattern>
<pattern id="pX" patternUnits="userSpaceOnUse" width="16" height="2.95"><path d="M0,0L16,2.95M0,2.95L16,0M0,-2.95L16,0M0,0L16,-2.95M0,2.95L16,5.9M0,5.9L16,2.95" stroke="#4fd24f" stroke-width="1.7"/></pattern>
<clipPath id="cPF"><rect x="5" y="59" width="854" height="779"/></clipPath>
<clipPath id="cK"><rect x="904" y="59" width="723" height="630"/></clipPath>
<clipPath id="cM"><rect x="904" y="695" width="723" height="143"/></clipPath>
<linearGradient id="gP" x1="0" y1="58" x2="0" y2="690" gradientUnits="userSpaceOnUse"><stop offset="0" stop-color="rgb(121,121,174)"/><stop offset="1" stop-color="rgb(198,198,220)"/></linearGradient>
</defs>
<g clip-path="url(#cPF)">
<g transform="translate(9,271.0)"><rect width="16" height="3.5" fill="url(#pX)"/></g>
<g transform="translate(29,272.6)"><rect width="16" height="14.8" fill="url(#pO)"/></g>
<g transform="translate(48,252.8)"><rect width="16" height="33.2" fill="url(#pX)"/></g>
<g transform="translate(68,254.0)"><rect width="16" height="71.6" fill="url(#pO)"/></g>
<g transform="translate(88,204.0)"><rect width="16" height="120.8" fill="url(#pX)"/></g>
<g transform="translate(108,205.2)"><rect width="16" height="220.0" fill="url(#pO)"/></g>
<g transform="translate(128,376.0)"><rect width="16" height="47.7" fill="url(#pX)"/></g>
<g transform="translate(148,377.2)"><rect width="16" height="248.3" fill="url(#pO)"/></g>
<g transform="translate(167,495.8)"><rect width="16" height="129.0" fill="url(#pX)"/></g>
<g transform="translate(187,497.7)"><rect width="16" height="22.9" fill="url(#pO)"/></g>
<g transform="translate(207,492.9)"><rect width="16" height="26.2" fill="url(#pX)"/></g>
<g transform="translate(227,494.8)"><rect width="16" height="11.9" fill="url(#pO)"/></g>
<g transform="translate(247,489.7)"><rect width="16" height="15.3" fill="url(#pX)"/></g>
<g transform="translate(267,492.0)"><rect width="16" height="28.0" fill="url(#pO)"/></g>
<g transform="translate(286,327.8)"><rect width="16" height="190.4" fill="url(#pX)"/></g>
<g transform="translate(306,329.1)"><rect width="16" height="5.5" fill="url(#pO)"/></g>
<g transform="translate(326,264.7)"><rect width="16" height="69.1" fill="url(#pX)"/></g>
<g transform="translate(346,266.0)"><rect width="16" height="30.2" fill="url(#pO)"/></g>
<g transform="translate(366,281.7)"><rect width="16" height="14.5" fill="url(#pX)"/></g>
<g transform="translate(386,283.3)"><rect width="16" height="97.1" fill="url(#pO)"/></g>
<g transform="translate(405,334.6)"><rect width="16" height="44.4" fill="url(#pX)"/></g>
<g transform="translate(425,336.5)"><rect width="16" height="5.0" fill="url(#pO)"/></g>
<g transform="translate(445,319.5)"><rect width="16" height="21.5" fill="url(#pX)"/></g>
<g transform="translate(465,321.0)"><rect width="16" height="29.5" fill="url(#pO)"/></g>
<g transform="translate(485,325.6)"><rect width="16" height="23.6" fill="url(#pX)"/></g>
<g transform="translate(505,327.8)"><rect width="16" height="50.7" fill="url(#pO)"/></g>
<g transform="translate(524,351.6)"><rect width="16" height="26.1" fill="url(#pX)"/></g>
<g transform="translate(544,353.3)"><rect width="16" height="27.1" fill="url(#pO)"/></g>
<g transform="translate(564,330.5)"><rect width="16" height="49.4" fill="url(#pX)"/></g>
<g transform="translate(584,332.4)"><rect width="16" height="5.0" fill="url(#pO)"/></g>
<g transform="translate(604,315.4)"><rect width="16" height="21.1" fill="url(#pX)"/></g>
<g transform="translate(624,316.8)"><rect width="16" height="21.9" fill="url(#pO)"/></g>
<g transform="translate(643,329.7)"><rect width="16" height="6.8" fill="url(#pX)"/></g>
<g transform="translate(663,331.3)"><rect width="16" height="33.5" fill="url(#pO)"/></g>
<g transform="translate(683,310.8)"><rect width="16" height="53.2" fill="url(#pX)"/></g>
<line x1="333" y1="265" x2="688" y2="265" stroke="#000" stroke-width="2" stroke-dasharray="5,5"/>
<line x1="610" y1="315" x2="685" y2="315" stroke="#000" stroke-width="2" stroke-dasharray="5,5"/>
<line x1="650" y1="329" x2="685" y2="329" stroke="#000" stroke-width="2" stroke-dasharray="5,5"/>
<line x1="670" y1="363.5" x2="685" y2="363.5" stroke="#000" stroke-width="2" stroke-dasharray="5,5"/>
</g>
<g clip-path="url(#cK)">
<polygon points="987.5,58.0 1056.9,58.0 1058.5,67.2 1060.6,80.2 1063.2,95.4 1065.9,111.5 1068.6,127.2 1071.0,141.0 1073.2,152.7 1075.3,163.2 1077.4,173.3 1079.5,183.6 1081.6,194.5 1083.7,206.7 1085.8,220.5 1087.8,235.6 1089.8,251.3 1091.9,267.2 1094.1,282.9 1096.3,297.8 1098.7,312.3 1101.2,326.8 1103.7,341.1 1106.3,354.7 1108.9,367.4 1111.5,378.7 1114.1,388.5 1116.6,397.0 1119.2,404.6 1121.8,411.4 1124.3,417.9 1126.7,424.2 1129.0,430.4 1131.1,436.2 1133.2,441.5 1135.3,446.5 1137.5,451.1 1140.0,455.3 1142.8,459.0 1145.8,462.1 1148.9,464.9 1152.1,467.4 1155.2,469.9 1158.0,472.4 1160.6,475.0 1163.1,477.6 1165.5,480.1 1167.9,482.5 1170.1,484.8 1172.4,486.8 1174.6,488.7 1176.7,490.5 1178.7,492.2 1180.7,493.6 1182.8,494.7 1185.0,495.4 1187.4,495.6 1189.9,495.4 1192.4,494.9 1194.9,494.1 1197.3,493.2 1199.4,492.2 1201.2,491.1 1202.8,489.9 1204.3,488.5 1205.7,486.9 1207.0,485.2 1208.3,483.2 1209.6,481.0 1210.8,478.7 1211.9,476.1 1213.0,473.3 1214.2,470.3 1215.5,467.0 1216.8,463.4 1218.0,459.5 1219.3,455.4 1220.7,451.1 1222.4,446.5 1224.5,441.8 1227.0,437.2 1229.9,432.8 1233.0,428.2 1236.3,423.0 1239.7,416.7 1243.0,409.0 1246.3,399.5 1249.8,388.4 1253.4,376.3 1256.9,363.7 1260.2,350.8 1263.3,338.3 1266.2,325.4 1269.0,311.7 1271.6,297.8 1274.1,284.5 1276.4,272.5 1278.4,262.4 1280.1,254.6 1281.4,248.7 1282.5,244.0 1283.6,240.1 1284.7,236.2 1286.0,232.0 1287.5,227.4 1289.2,222.9 1290.9,218.5 1292.6,214.4 1294.4,210.4 1296.0,206.7 1297.6,203.0 1299.3,199.3 1300.9,195.7 1302.4,192.7 1303.8,190.5 1305.1,189.3 1306.2,189.4 1307.0,190.5 1307.8,192.4 1308.5,194.8 1309.3,197.6 1310.1,200.4 1311.0,203.4 1311.9,206.6 1312.8,210.2 1313.8,214.1 1314.9,218.3 1316.2,222.7 1317.7,227.7 1319.3,233.4 1321.1,239.3 1322.9,245.2 1324.7,250.6 1326.4,255.2 1328.0,259.0 1329.6,262.4 1331.1,265.3 1332.6,267.7 1334.1,269.8 1335.5,271.4 1336.9,272.4 1338.1,272.7 1339.4,272.5 1340.6,272.3 1342.0,272.1 1343.6,272.4 1345.4,273.3 1347.5,274.5 1349.6,275.9 1351.8,277.2 1353.9,278.1 1355.8,278.5 1357.5,278.1 1359.1,277.0 1360.6,275.6 1362.1,274.2 1363.5,273.0 1364.9,272.4 1366.3,272.4 1367.7,272.8 1369.0,273.5 1370.3,274.3 1371.7,275.0 1373.0,275.4 1374.3,275.6 1375.7,275.6 1377.0,275.5 1378.4,275.4 1379.8,275.4 1381.1,275.4 1382.4,275.6 1383.8,276.0 1385.1,276.3 1386.5,276.6 1387.8,276.7 1389.2,276.4 1390.5,275.7 1391.9,274.7 1393.2,273.5 1394.5,272.1 1395.9,270.7 1397.3,269.4 1398.8,268.0 1400.4,266.3 1402.1,264.7 1403.7,263.1 1405.2,261.9 1406.4,261.2 1407.3,260.9 1408.0,260.9 1408.5,261.2 1408.9,261.9 1409.6,262.9 1410.5,264.3 1411.8,266.4 1413.3,269.1 1414.9,272.2 1416.6,275.4 1418.2,278.2 1419.6,280.5 1420.8,282.1 1421.8,283.4 1422.7,284.3 1423.6,285.1 1424.6,285.8 1425.7,286.6 1426.9,287.3 1428.2,287.7 1429.6,288.2 1430.9,288.7 1432.4,289.4 1433.8,290.6 1435.2,292.3 1436.6,294.5 1438.0,296.9 1439.5,299.4 1441.2,301.8 1443.0,303.8 1445.2,305.6 1447.7,307.3 1450.3,308.9 1452.9,310.3 1455.2,311.4 1457.1,312.3 1458.4,312.9 1459.2,313.4 1459.8,313.6 1460.3,313.5 1461.0,313.1 1462.2,312.3 1463.8,310.9 1465.8,308.8 1468.0,306.4 1470.2,303.9 1472.4,301.6 1474.4,299.8 1476.2,298.7 1477.8,298.0 1479.3,297.6 1480.9,297.1 1482.6,296.2 1484.5,294.7 1486.7,292.3 1489.1,289.2 1491.6,285.7 1494.1,282.2 1496.5,278.9 1498.7,276.4 1500.6,274.5 1502.3,273.0 1503.9,271.8 1505.4,270.8 1507.0,270.0 1508.8,269.4 1510.7,269.0 1512.7,269.0 1514.8,269.2 1516.9,269.4 1518.9,269.5 1521.0,269.4 1523.1,269.0 1525.4,268.4 1527.6,267.6 1529.7,267.0 1531.6,266.5 1533.2,266.3 1534.2,266.5 1534.8,267.0 1535.1,267.8 1535.4,268.5 1536.0,269.3 1537.2,269.8 1539.0,270.1 1541.3,270.2 1543.9,270.2 1546.6,270.4 1549.1,270.7 1551.4,271.4 1553.4,272.6 1555.3,274.1 1557.0,275.9 1558.7,277.7 1560.2,279.3 1561.6,280.5 1562.8,281.2 1563.7,281.4 1564.5,281.5 1565.4,281.6 1566.3,281.9 1567.6,282.5 1569.2,283.7 1571.0,285.3 1573.0,287.1 1575.0,288.8 1577.0,290.3 1578.8,291.2 1580.4,291.5 1582.0,291.4 1583.4,291.0 1584.9,290.5 1586.3,289.8 1587.9,289.2 1589.6,288.6 1591.3,287.8 1593.1,287.0 1594.8,286.1 1596.5,285.3 1598.0,284.6 1599.4,284.0 1600.7,283.5 1601.9,283.0 1603.0,282.5 1604.1,281.9 1605.1,281.1 1606.0,280.2 1606.8,279.2 1607.6,278.1 1608.3,276.9 1609.2,275.7 1610.2,274.4 1611.5,272.9 1613.1,271.2 1614.8,269.4 1616.4,267.7 1617.7,266.3 1618.7,265.3 1618.7,656.2 1609.1,656.1 1595.6,656.0 1579.8,655.8 1562.8,655.7 1546.1,655.5 1531.0,655.4 1517.4,655.2 1504.1,655.0 1491.1,654.9 1478.2,654.7 1465.3,654.6 1452.3,654.6 1438.7,654.7 1424.6,655.0 1410.4,655.4 1396.8,655.7 1384.3,656.0 1373.5,656.2 1364.7,656.3 1357.5,656.2 1351.4,656.2 1345.8,656.1 1340.3,656.1 1334.2,656.2 1327.6,656.5 1321.1,656.9 1314.5,657.4 1307.9,657.9 1301.4,658.2 1294.8,658.2 1288.3,657.9 1282.0,657.5 1275.6,656.8 1269.2,656.1 1262.5,655.4 1255.5,654.6 1248.0,653.8 1240.1,652.9 1231.9,651.9 1223.7,650.9 1215.8,650.1 1208.3,649.5 1201.3,649.1 1194.6,648.8 1188.1,648.7 1181.7,648.6 1175.4,648.6 1168.9,648.7 1162.3,648.8 1155.8,649.1 1149.2,649.4 1142.6,649.7 1136.1,650.2 1129.5,650.7 1123.1,651.3 1116.8,651.9 1110.6,652.6 1104.2,653.3 1097.4,654.3 1090.2,655.4 1082.0,656.9 1072.8,658.7 1063.4,660.6 1054.2,662.5 1045.8,664.1 1039.0,665.3 1034.0,666.0 1030.6,666.4 1028.0,666.6 1025.6,666.5 1023.0,666.3 1019.4,666.0 1014.5,665.5 1008.6,664.7 1002.4,663.7 996.5,662.7 991.5,661.9 987.9,661.3" fill="url(#gP)"/>
<polyline points="1056.9,58.0 1058.5,67.2 1060.6,80.2 1063.2,95.4 1065.9,111.5 1068.6,127.2 1071.0,141.0 1073.2,152.7 1075.3,163.2 1077.4,173.3 1079.5,183.6 1081.6,194.5 1083.7,206.7 1085.8,220.5 1087.8,235.6 1089.8,251.3 1091.9,267.2 1094.1,282.9 1096.3,297.8 1098.7,312.3 1101.2,326.8 1103.7,341.1 1106.3,354.7 1108.9,367.4 1111.5,378.7 1114.1,388.5 1116.6,397.0 1119.2,404.6 1121.8,411.4 1124.3,417.9 1126.7,424.2 1129.0,430.4 1131.1,436.2 1133.2,441.5 1135.3,446.5 1137.5,451.1 1140.0,455.3 1142.8,459.0 1145.8,462.1 1148.9,464.9 1152.1,467.4 1155.2,469.9 1158.0,472.4 1160.6,475.0 1163.1,477.6 1165.5,480.1 1167.9,482.5 1170.1,484.8 1172.4,486.8 1174.6,488.7 1176.7,490.5 1178.7,492.2 1180.7,493.6 1182.8,494.7 1185.0,495.4 1187.4,495.6" fill="none" stroke="#ff0000" stroke-width="1.1"/><polyline points="1187.4,495.6 1189.9,495.4 1192.4,494.9 1194.9,494.1 1197.3,493.2 1199.4,492.2 1201.2,491.1 1202.8,489.9 1204.3,488.5 1205.7,486.9 1207.0,485.2 1208.3,483.2 1209.6,481.0 1210.8,478.7 1211.9,476.1 1213.0,473.3 1214.2,470.3 1215.5,467.0 1216.8,463.4 1218.0,459.5 1219.3,455.4 1220.7,451.1 1222.4,446.5 1224.5,441.8 1227.0,437.2 1229.9,432.8 1233.0,428.2 1236.3,423.0 1239.7,416.7 1243.0,409.0 1246.3,399.5 1249.8,388.4 1253.4,376.3 1256.9,363.7 1260.2,350.8 1263.3,338.3 1266.2,325.4 1269.0,311.7 1271.6,297.8 1274.1,284.5 1276.4,272.5 1278.4,262.4 1280.1,254.6 1281.4,248.7 1282.5,244.0 1283.6,240.1 1284.7,236.2 1286.0,232.0 1287.5,227.4 1289.2,222.9 1290.9,218.5 1292.6,214.4 1294.4,210.4 1296.0,206.7 1297.6,203.0 1299.3,199.3 1300.9,195.7 1302.4,192.7 1303.8,190.5 1305.1,189.3" fill="none" stroke="#0000ff" stroke-width="1.1"/><polyline points="1305.1,189.3 1306.2,189.4 1307.0,190.5 1307.8,192.4 1308.5,194.8 1309.3,197.6 1310.1,200.4 1311.0,203.4 1311.9,206.6 1312.8,210.2 1313.8,214.1 1314.9,218.3 1316.2,222.7 1317.7,227.7 1319.3,233.4 1321.1,239.3 1322.9,245.2 1324.7,250.6 1326.4,255.2 1328.0,259.0 1329.6,262.4 1331.1,265.3 1332.6,267.7 1334.1,269.8 1335.5,271.4 1336.9,272.4 1338.1,272.7" fill="none" stroke="#ff0000" stroke-width="1.1"/><polyline points="1338.1,272.7 1339.4,272.5 1340.6,272.3 1342.0,272.1" fill="none" stroke="#0000ff" stroke-width="1.1"/><polyline points="1342.0,272.1 1343.6,272.4 1345.4,273.3 1347.5,274.5 1349.6,275.9 1351.8,277.2 1353.9,278.1 1355.8,278.5" fill="none" stroke="#ff0000" stroke-width="1.1"/><polyline points="1355.8,278.5 1357.5,278.1 1359.1,277.0 1360.6,275.6 1362.1,274.2 1363.5,273.0 1364.9,272.4" fill="none" stroke="#0000ff" stroke-width="1.1"/><polyline points="1364.9,272.4 1366.3,272.4 1367.7,272.8 1369.0,273.5 1370.3,274.3 1371.7,275.0 1373.0,275.4 1374.3,275.6 1375.7,275.6" fill="none" stroke="#ff0000" stroke-width="1.1"/><polyline points="1375.7,275.6 1377.0,275.5 1378.4,275.4 1379.8,275.4" fill="none" stroke="#0000ff" stroke-width="1.1"/><polyline points="1379.8,275.4 1381.1,275.4 1382.4,275.6 1383.8,276.0 1385.1,276.3 1386.5,276.6 1387.8,276.7" fill="none" stroke="#ff0000" stroke-width="1.1"/><polyline points="1387.8,276.7 1389.2,276.4 1390.5,275.7 1391.9,274.7 1393.2,273.5 1394.5,272.1 1395.9,270.7 1397.3,269.4 1398.8,268.0 1400.4,266.3 1402.1,264.7 1403.7,263.1 1405.2,261.9 1406.4,261.2 1407.3,260.9 1408.0,260.9" fill="none" stroke="#0000ff" stroke-width="1.1"/><polyline points="1408.0,260.9 1408.5,261.2 1408.9,261.9 1409.6,262.9 1410.5,264.3 1411.8,266.4 1413.3,269.1 1414.9,272.2 1416.6,275.4 1418.2,278.2 1419.6,280.5 1420.8,282.1 1421.8,283.4 1422.7,284.3 1423.6,285.1 1424.6,285.8 1425.7,286.6 1426.9,287.3 1428.2,287.7 1429.6,288.2 1430.9,288.7 1432.4,289.4 1433.8,290.6 1435.2,292.3 1436.6,294.5 1438.0,296.9 1439.5,299.4 1441.2,301.8 1443.0,303.8 1445.2,305.6 1447.7,307.3 1450.3,308.9 1452.9,310.3 1455.2,311.4 1457.1,312.3 1458.4,312.9 1459.2,313.4 1459.8,313.6" fill="none" stroke="#ff0000" stroke-width="1.1"/><polyline points="1459.8,313.6 1460.3,313.5 1461.0,313.1 1462.2,312.3 1463.8,310.9 1465.8,308.8 1468.0,306.4 1470.2,303.9 1472.4,301.6 1474.4,299.8 1476.2,298.7 1477.8,298.0 1479.3,297.6 1480.9,297.1 1482.6,296.2 1484.5,294.7 1486.7,292.3 1489.1,289.2 1491.6,285.7 1494.1,282.2 1496.5,278.9 1498.7,276.4 1500.6,274.5 1502.3,273.0 1503.9,271.8 1505.4,270.8 1507.0,270.0 1508.8,269.4 1510.7,269.0 1512.7,269.0" fill="none" stroke="#0000ff" stroke-width="1.1"/><polyline points="1512.7,269.0 1514.8,269.2 1516.9,269.4 1518.9,269.5" fill="none" stroke="#ff0000" stroke-width="1.1"/><polyline points="1518.9,269.5 1521.0,269.4 1523.1,269.0 1525.4,268.4 1527.6,267.6 1529.7,267.0 1531.6,266.5 1533.2,266.3" fill="none" stroke="#0000ff" stroke-width="1.1"/><polyline points="1533.2,266.3 1534.2,266.5 1534.8,267.0 1535.1,267.8 1535.4,268.5 1536.0,269.3 1537.2,269.8 1539.0,270.1 1541.3,270.2 1543.9,270.2 1546.6,270.4 1549.1,270.7 1551.4,271.4 1553.4,272.6 1555.3,274.1 1557.0,275.9 1558.7,277.7 1560.2,279.3 1561.6,280.5 1562.8,281.2 1563.7,281.4 1564.5,281.5 1565.4,281.6 1566.3,281.9 1567.6,282.5 1569.2,283.7 1571.0,285.3 1573.0,287.1 1575.0,288.8 1577.0,290.3 1578.8,291.2 1580.4,291.5" fill="none" stroke="#ff0000" stroke-width="1.1"/><polyline points="1580.4,291.5 1582.0,291.4 1583.4,291.0 1584.9,290.5 1586.3,289.8 1587.9,289.2 1589.6,288.6 1591.3,287.8 1593.1,287.0 1594.8,286.1 1596.5,285.3 1598.0,284.6 1599.4,284.0 1600.7,283.5 1601.9,283.0 1603.0,282.5 1604.1,281.9 1605.1,281.1 1606.0,280.2 1606.8,279.2 1607.6,278.1 1608.3,276.9 1609.2,275.7 1610.2,274.4 1611.5,272.9 1613.1,271.2 1614.8,269.4 1616.4,267.7 1617.7,266.3 1618.7,265.3" fill="none" stroke="#0000ff" stroke-width="1.1"/>
<polyline points="987.9,661.3 991.5,661.9 996.5,662.7 1002.4,663.7 1008.6,664.7 1014.5,665.5 1019.4,666.0 1023.0,666.3 1025.6,666.5 1028.0,666.6 1030.6,666.4 1034.0,666.0 1039.0,665.3 1045.8,664.1 1054.2,662.5 1063.4,660.6 1072.8,658.7 1082.0,656.9 1090.2,655.4 1097.4,654.3 1104.2,653.3 1110.6,652.6 1116.8,651.9 1123.1,651.3 1129.5,650.7 1136.1,650.2 1142.6,649.7 1149.2,649.4 1155.8,649.1 1162.3,648.8 1168.9,648.7 1175.4,648.6 1181.7,648.6 1188.1,648.7 1194.6,648.8 1201.3,649.1 1208.3,649.5 1215.8,650.1 1223.7,650.9 1231.9,651.9 1240.1,652.9 1248.0,653.8 1255.5,654.6 1262.5,655.4 1269.2,656.1 1275.6,656.8 1282.0,657.5 1288.3,657.9 1294.8,658.2 1301.4,658.2 1307.9,657.9 1314.5,657.4 1321.1,656.9 1327.6,656.5 1334.2,656.2 1340.3,656.1 1345.8,656.1 1351.4,656.2 1357.5,656.2 1364.7,656.3 1373.5,656.2 1384.3,656.0 1396.8,655.7 1410.4,655.4 1424.6,655.0 1438.7,654.7 1452.3,654.6 1465.3,654.6 1478.2,654.7 1491.1,654.9 1504.1,655.0 1517.4,655.2 1531.0,655.4 1546.1,655.5 1562.8,655.7 1579.8,655.8 1595.6,656.0 1609.1,656.1 1618.7,656.2" fill="none" stroke="#e83a3a" stroke-width="1"/>
<polyline points="945.7,368.9 947.4,372.1 949.9,376.8 952.8,382.2 955.7,387.5 958.4,391.9 960.6,394.5 962.0,395.5 962.8,395.6" fill="none" stroke="#ff2020" stroke-width="1" stroke-dasharray="3,3"/><polyline points="962.8,395.6 963.4,394.8 964.1,392.9 965.2,390.0 967.0,386.0 969.7,380.5 973.2,373.6 977.0,365.6 981.0,356.9 984.9,347.9 988.4,339.0 991.6,329.7 994.7,319.5 997.6,309.1 1000.4,298.9 1003.1,289.4 1005.5,281.3 1007.7,274.3 1009.8,268.0 1011.7,262.5 1013.3,257.8 1014.9,254.1 1016.2,251.4 1017.2,250.0 1017.9,249.9" fill="none" stroke="#2020ff" stroke-width="1" stroke-dasharray="3,3"/><polyline points="1017.9,249.9 1018.4,250.7 1018.9,252.1 1019.6,253.9 1020.5,255.6 1021.8,257.3 1023.3,259.1 1024.9,261.2 1026.6,263.9 1028.3,267.1 1030.0,271.0 1031.7,276.0 1033.4,281.9 1035.1,288.5 1036.8,295.2 1038.4,301.9 1040.0,308.0 1041.4,312.8 1042.6,316.3 1043.7,319.7 1045.0,324.0 1046.5,330.4 1048.5,340.0 1051.0,353.9 1053.9,371.6 1057.1,391.3 1060.4,411.4 1063.8,430.2 1067.0,446.0 1070.2,458.7 1073.5,469.7 1076.8,479.3 1080.1,488.1 1083.2,496.5 1086.0,505.0 1088.4,513.4 1090.5,521.4 1092.4,529.0 1094.4,536.3 1096.5,543.2 1099.0,550.0 1101.8,556.8 1104.7,563.7 1107.9,570.4 1111.3,576.4 1114.9,581.4 1119.0,585.0 1123.5,587.0 1128.4,587.4" fill="none" stroke="#ff2020" stroke-width="1" stroke-dasharray="3,3"/><polyline points="1128.4,587.4 1133.6,586.9 1139.0,585.9 1144.5,584.8 1150.0,584.0 1155.7,583.9" fill="none" stroke="#2020ff" stroke-width="1" stroke-dasharray="3,3"/><polyline points="1155.7,583.9 1161.6,584.0 1167.6,584.1" fill="none" stroke="#ff2020" stroke-width="1" stroke-dasharray="3,3"/><polyline points="1167.6,584.1 1173.6,583.7 1179.4,582.5 1185.0,580.0 1190.3,575.9 1195.6,570.5 1200.6,564.2 1205.6,557.5 1210.3,551.0 1215.0,545.0 1219.6,539.6 1224.0,534.5 1228.4,529.4 1232.5,524.4 1236.4,519.3 1240.0,514.0 1243.1,509.0 1245.7,504.4 1248.0,499.8 1250.3,494.5 1252.9,488.1 1256.0,480.0 1259.7,469.2 1263.9,455.7 1268.3,441.2 1272.8,426.9 1277.1,414.4 1281.0,405.0 1284.6,398.7 1287.9,394.4 1291.1,391.8 1294.2,390.7" fill="none" stroke="#2020ff" stroke-width="1" stroke-dasharray="3,3"/><polyline points="1294.2,390.7 1297.1,390.8 1300.0,392.0 1302.7,394.7 1305.1,399.2 1307.4,405.0 1309.7,411.5 1312.2,418.2 1315.0,424.5 1318.1,431.1 1321.3,438.4 1324.8,445.9 1328.3,453.0 1332.1,459.2 1336.0,463.8 1340.2,466.6 1344.6,468.1 1349.1,468.6" fill="none" stroke="#ff2020" stroke-width="1" stroke-dasharray="3,3"/><polyline points="1349.1,468.6 1353.8,468.6 1358.4,468.3 1363.0,468.3" fill="none" stroke="#2020ff" stroke-width="1" stroke-dasharray="3,3"/><polyline points="1363.0,468.3 1367.7,468.4" fill="none" stroke="#ff2020" stroke-width="1" stroke-dasharray="3,3"/><polyline points="1367.7,468.4 1372.5,468.4 1377.3,468.1 1382.0,467.7 1386.3,467.2 1390.0,466.5 1393.1,465.4 1395.6,463.8 1397.7,462.0 1399.7,460.4 1401.7,459.4 1404.0,459.3" fill="none" stroke="#2020ff" stroke-width="1" stroke-dasharray="3,3"/><polyline points="1404.0,459.3 1406.5,460.3 1409.1,462.2 1411.8,464.6 1414.5,467.3 1417.3,469.8 1420.0,471.9 1422.8,473.5 1425.6,474.9 1428.4,476.1 1431.3,477.4 1434.2,478.6 1437.0,480.0 1439.9,481.6 1442.9,483.5 1446.0,485.4 1448.9,487.1 1451.6,488.6 1454.0,489.5 1455.8,490.1 1456.9,490.5 1457.8,490.6" fill="none" stroke="#ff2020" stroke-width="1" stroke-dasharray="3,3"/><polyline points="1457.8,490.6 1458.9,490.2 1460.7,489.2 1463.5,487.5 1467.8,484.6 1473.2,480.5 1479.3,475.8 1485.5,471.1 1491.2,467.0 1496.0,464.0 1499.7,462.3 1502.6,461.4 1505.2,461.1" fill="none" stroke="#2020ff" stroke-width="1" stroke-dasharray="3,3"/><polyline points="1505.2,461.1 1507.5,461.1 1510.1,461.2" fill="none" stroke="#ff2020" stroke-width="1" stroke-dasharray="3,3"/><polyline points="1510.1,461.2 1513.0,461.2 1516.4,461.1" fill="none" stroke="#2020ff" stroke-width="1" stroke-dasharray="3,3"/><polyline points="1516.4,461.1 1520.0,461.1 1523.7,461.2 1527.5,461.4 1531.3,461.7 1535.0,462.0 1538.7,462.3 1542.4,462.6 1546.2,462.9 1549.9,463.5 1553.5,464.2 1557.0,465.3 1560.4,467.0 1563.7,469.3 1567.0,471.8 1570.1,474.2 1573.2,476.2 1576.0,477.4 1578.6,477.8" fill="none" stroke="#ff2020" stroke-width="1" stroke-dasharray="3,3"/><polyline points="1578.6,477.8 1581.1,477.5 1583.4,476.8 1585.6,475.9 1587.8,474.9 1590.0,474.0 1592.2,473.2 1594.3,472.4 1596.4,471.5 1598.6,470.6 1600.7,469.4 1603.0,468.0 1605.6,466.2 1608.4,463.9 1611.3,461.5 1614.0,459.2 1616.3,457.2 1618.0,455.8" fill="none" stroke="#2020ff" stroke-width="1" stroke-dasharray="3,3"/>
<polyline points="988.4,351.8 990.3,347.7 993.1,342.0 996.3,335.3 999.6,328.2 1002.8,321.4 1005.5,315.5 1007.7,310.3 1009.6,305.3 1011.4,300.6 1013.0,296.3 1014.6,292.7 1016.2,289.8 1017.5,287.3 1018.5,285.0 1019.4,283.3 1020.6,282.6" fill="none" stroke="#2020ff" stroke-width="1" stroke-dasharray="3,3"/><polyline points="1020.6,282.6 1022.2,283.6 1024.7,286.6 1027.9,291.0 1031.5,296.3 1035.6,303.1 1040.4,312.2 1045.8,324.3 1052.0,340.0 1059.4,361.7 1067.9,389.3 1077.1,419.9 1086.6,450.4 1095.7,478.1 1104.0,500.0 1111.5,515.8 1118.6,527.7 1125.3,536.8 1131.9,543.9 1138.4,549.9 1145.0,555.8 1152.0,561.0 1159.4,564.8 1166.7,567.5 1173.5,569.6 1179.4,571.3 1184.0,573.0 1186.5,575.2 1186.9,577.6 1186.5,579.6 1186.3,580.8" fill="none" stroke="#ff2020" stroke-width="1" stroke-dasharray="3,3"/><polyline points="1186.3,580.8 1187.2,580.6 1190.4,578.5 1196.4,574.0 1204.6,567.6 1213.9,559.7 1223.5,551.0 1232.5,542.1 1240.0,533.5 1246.0,524.9 1251.2,515.6 1255.7,506.2 1259.8,496.8 1263.7,488.0 1267.4,480.0 1270.9,472.9 1273.9,466.3 1276.6,460.2 1279.2,454.5 1281.9,449.3 1284.6,444.5 1287.6,439.9 1290.6,435.6 1293.7,431.7 1296.6,428.4 1299.4,425.9 1301.8,424.5 1303.7,424.0" fill="none" stroke="#2020ff" stroke-width="1" stroke-dasharray="3,3"/><polyline points="1303.7,424.0 1305.0,424.3 1306.1,425.4 1307.3,427.4 1308.9,430.2 1311.3,434.0 1314.6,439.6 1318.5,447.0 1322.8,455.4 1327.3,463.6 1331.8,470.6 1336.0,475.4 1339.8,477.6 1343.2,478.1" fill="none" stroke="#ff2020" stroke-width="1" stroke-dasharray="3,3"/><polyline points="1343.2,478.1 1346.6,477.4 1350.3,476.1 1354.4,474.6 1359.3,473.6 1365.3,472.8 1372.3,471.7 1379.9,470.4 1387.3,469.3 1394.2,468.4 1400.0,468.0 1404.4,467.9" fill="none" stroke="#2020ff" stroke-width="1" stroke-dasharray="3,3"/><polyline points="1404.4,467.9 1407.8,468.0 1410.7,468.4 1413.4,469.1 1416.3,470.3 1420.0,472.0 1424.5,474.7 1429.6,478.4 1435.0,482.5 1440.4,486.5 1445.5,489.9 1450.0,492.0 1453.8,492.9 1457.0,492.9" fill="none" stroke="#ff2020" stroke-width="1" stroke-dasharray="3,3"/><polyline points="1457.0,492.9 1460.0,492.2 1463.0,491.1 1466.2,489.6 1470.0,488.0 1474.4,485.9 1479.3,483.1 1484.4,480.0 1489.6,476.9 1494.9,474.1 1500.0,472.0 1505.0,470.5 1510.0,469.4 1515.0,468.6 1520.0,468.1 1525.0,467.9" fill="none" stroke="#2020ff" stroke-width="1" stroke-dasharray="3,3"/><polyline points="1525.0,467.9 1530.0,468.0 1535.1,468.4 1540.4,469.2 1545.6,470.2 1550.7,471.5 1555.6,472.8 1560.0,474.0 1563.9,475.4 1567.4,477.2 1570.6,479.0 1573.7,480.6 1576.8,481.7 1580.0,482.0" fill="none" stroke="#ff2020" stroke-width="1" stroke-dasharray="3,3"/><polyline points="1580.0,482.0 1583.4,481.4 1586.7,480.0 1590.1,478.2 1593.5,476.1 1596.8,473.9 1600.0,472.0 1603.3,470.1 1606.8,468.1 1610.2,466.0 1613.4,464.0 1616.1,462.4 1618.0,461.2" fill="none" stroke="#2020ff" stroke-width="1" stroke-dasharray="3,3"/>
<path d="M916.5,388V422M915,413.5H916M917,396.5H918M922.5,386V428M921,417.5H922M923,396.5H924M925.5,376V405M924,397.5H925M926,383.5H927M928.5,333V381M927,368.5H928M929,345.5H930M931.5,306V341M930,332.5H931M932,314.5H933M934.5,286V314M933,306.5H934M935,293.5H936M949.5,414V483M948,465.5H949M950,431.5H951M952.5,401V433M951,424.5H952M953,409.5H954M961.5,393V434M960,423.5H961M962,403.5H963M964.5,372V413M963,402.5H964M965,382.5H966M967.5,343V382M966,372.5H967M968,352.5H969M973.5,312V362M972,349.5H973M974,324.5H975M979.5,290V340M978,327.5H979M980,302.5H981M988.5,293V315M987,309.5H988M989,298.5H990M991.5,216V294M990,274.5H991M992,235.5H993M1000.5,206V279M999,260.5H1000M1001,224.5H1002M1006.5,167V234M1005,216.5H1006M1007,184.5H1008M1012.5,186V225M1011,214.5H1012M1013,196.5H1014M1027.5,264V302M1026,292.5H1027M1028,273.5H1029M1039.5,370V427M1038,412.5H1039M1040,384.5H1041M1042.5,352V383M1041,374.5H1042M1043,360.5H1044M1058.5,512V568M1057,553.5H1058M1059,526.5H1060M1061.5,470V525M1060,510.5H1061M1062,484.5H1063M1073.5,514V543M1072,535.5H1073M1074,521.5H1075M1076.5,506V536M1075,528.5H1076M1077,513.5H1078M1088.5,561V599M1087,589.5H1088M1089,570.5H1090M1097.5,599V630M1096,622.5H1097M1098,606.5H1099M1109.5,611V622M1108,618.5H1109M1110,614.5H1111M1112.5,608V618M1111,615.5H1112M1113,610.5H1114M1118.5,599V611M1117,607.5H1118M1119,602.5H1120M1121.5,592V611M1120,606.5H1121M1122,596.5H1123M1124.5,572V595M1123,588.5H1124M1125,578.5H1126M1130.5,575V590M1129,586.5H1130M1131,578.5H1132M1139.5,576V592M1138,587.5H1139M1140,580.5H1141M1142.5,574V585M1141,582.5H1142M1143,576.5H1144M1157.5,583V591M1156,588.5H1157M1158,585.5H1159M1160.5,580V590M1159,587.5H1160M1161,582.5H1162M1163.5,576V585M1162,582.5H1163M1164,578.5H1165M1169.5,581V589M1168,586.5H1169M1170,583.5H1171M1175.5,584V590M1174,588.5H1175M1176,585.5H1177M1178.5,581V588M1177,586.5H1178M1179,582.5H1180M1181.5,578V585M1180,582.5H1181M1182,580.5H1183M1187.5,572V580M1186,577.5H1187M1188,574.5H1189M1190.5,565V575M1189,572.5H1190M1191,567.5H1192M1193.5,567V575M1192,572.5H1193M1194,569.5H1195M1196.5,564V571M1195,568.5H1196M1197,566.5H1198M1199.5,561V568M1198,566.5H1199M1200,562.5H1201M1202.5,558V567M1201,564.5H1202M1203,560.5H1204M1205.5,542V560M1204,555.5H1205M1206,546.5H1207M1208.5,531V544M1207,540.5H1208M1209,534.5H1210M1211.5,517V534M1210,529.5H1211M1212,521.5H1213M1214.5,498V525M1213,518.5H1214M1215,504.5H1216M1217.5,499V517M1216,512.5H1217M1218,503.5H1219M1220.5,483V503M1219,497.5H1220M1221,488.5H1222M1226.5,505V534M1225,526.5H1226M1227,512.5H1228M1232.5,498V510M1231,506.5H1232M1233,501.5H1234M1235.5,498V506M1234,503.5H1235M1236,500.5H1237M1238.5,478V502M1237,495.5H1238M1239,484.5H1240M1241.5,468V481M1240,477.5H1241M1242,471.5H1243M1244.5,451V479M1243,471.5H1244M1245,458.5H1246M1253.5,455V475M1252,469.5H1253M1254,460.5H1255M1256.5,426V464M1255,454.5H1256M1257,435.5H1258M1259.5,413V439M1258,432.5H1259M1260,419.5H1261M1262.5,396V425M1261,417.5H1262M1263,403.5H1264M1265.5,377V418M1264,407.5H1265M1266,387.5H1267M1268.5,382V428M1267,416.5H1268M1269,393.5H1270M1271.5,375V401M1270,394.5H1271M1272,381.5H1273M1274.5,334V378M1273,366.5H1274M1275,345.5H1276M1290.5,407V437M1289,429.5H1290M1291,414.5H1292M1293.5,364V417M1292,403.5H1293M1294,377.5H1295M1296.5,337V364M1295,356.5H1296M1297,344.5H1298M1305.5,399V426M1304,418.5H1305M1306,406.5H1307M1314.5,500V547M1313,534.5H1314M1315,512.5H1316M1326.5,500V534M1325,525.5H1326M1327,508.5H1328M1329.5,487V509M1328,503.5H1329M1330,492.5H1331M1332.5,480V507M1331,500.5H1332M1333,486.5H1334M1338.5,472V505M1337,496.5H1338M1339,480.5H1340M1341.5,461V479M1340,474.5H1341M1342,465.5H1343M1344.5,453V475M1343,469.5H1344M1345,458.5H1346M1353.5,470V485M1352,480.5H1353M1354,474.5H1355M1359.5,453V482M1358,474.5H1359M1360,460.5H1361M1362.5,441V455M1361,451.5H1362M1363,444.5H1364M1374.5,456V485M1373,477.5H1374M1375,463.5H1376M1380.5,458V475M1379,470.5H1380M1381,462.5H1382M1389.5,458V475M1388,470.5H1389M1390,462.5H1391M1392.5,443V462M1391,456.5H1392M1393,448.5H1394M1395.5,442V457M1394,452.5H1395M1396,446.5H1397M1401.5,434V459M1400,452.5H1401M1402,440.5H1403M1419.5,490V517M1418,510.5H1419M1420,496.5H1421M1422.5,493V511M1421,506.5H1422M1423,497.5H1424M1425.5,490V501M1424,498.5H1425M1426,492.5H1427M1428.5,469V488M1427,482.5H1428M1429,474.5H1430M1434.5,474V490M1433,485.5H1434M1435,478.5H1436M1443.5,505V519M1442,515.5H1443M1444,508.5H1445M1446.5,494V511M1445,506.5H1446M1447,498.5H1448M1452.5,479V503M1451,496.5H1452M1453,485.5H1454M1458.5,484V501M1457,496.5H1458M1459,488.5H1460M1461.5,477V489M1460,485.5H1461M1462,480.5H1463M1464.5,469V478M1463,475.5H1464M1465,471.5H1466M1467.5,455V478M1466,472.5H1467M1468,460.5H1469M1470.5,452V459M1469,456.5H1470M1471,454.5H1472M1476.5,451V466M1475,462.5H1476M1477,454.5H1478M1488.5,451V471M1487,465.5H1488M1489,456.5H1490M1491.5,442V465M1490,458.5H1491M1492,448.5H1493M1494.5,438V447M1493,444.5H1494M1495,440.5H1496M1497.5,438V457M1496,452.5H1497M1498,442.5H1499M1506.5,443V457M1505,453.5H1506M1507,446.5H1508M1512.5,455V467M1511,463.5H1512M1513,458.5H1514M1518.5,454V469M1517,464.5H1518M1519,458.5H1520M1521.5,458V470M1520,466.5H1521M1522,461.5H1523M1524.5,451V463M1523,459.5H1524M1525,454.5H1526M1530.5,449V463M1529,459.5H1530M1531,452.5H1532M1540.5,464V493M1539,485.5H1540M1541,471.5H1542M1543.5,460V466M1542,464.5H1543M1544,461.5H1545M1549.5,461V477M1548,472.5H1549M1550,465.5H1551M1564.5,480V498M1563,493.5H1564M1565,484.5H1566M1567.5,473V486M1566,482.5H1567M1568,476.5H1569M1576.5,486V505M1575,500.5H1576M1577,490.5H1578M1579.5,478V489M1578,486.5H1579M1580,480.5H1581M1582.5,464V487M1581,480.5H1582M1583,470.5H1584M1585.5,461V470M1584,467.5H1585M1586,463.5H1587M1591.5,461V483M1590,477.5H1591M1592,466.5H1593M1594.5,454V468M1593,464.5H1594M1595,457.5H1596M1597.5,450V459M1596,456.5H1597M1598,452.5H1599M1603.5,453V472M1602,466.5H1603M1604,458.5H1605M1606.5,453V468M1605,464.5H1606M1607,456.5H1608M1609.5,435V456M1608,450.5H1609M1610,440.5H1611M1618.5,432V453M1617,447.5H1618M1619,437.5H1620" stroke="#0000ff" stroke-width="1" fill="none"/>
<path d="M907.5,315V355M906,325.5H907M908,344.5H909M910.5,337V372M909,346.5H910M911,362.5H912M913.5,340V439M912,364.5H913M914,414.5H915M919.5,383V416M918,391.5H919M920,407.5H921M937.5,295V340M936,306.5H937M938,328.5H939M940.5,304V338M939,312.5H940M941,329.5H942M943.5,336V437M942,361.5H943M944,411.5H945M946.5,397V465M945,414.5H946M947,447.5H948M955.5,411V439M954,418.5H955M956,431.5H957M958.5,408V445M957,417.5H958M959,435.5H960M970.5,335V360M969,341.5H970M971,353.5H972M976.5,308V347M975,318.5H976M977,336.5H978M982.5,270V315M981,281.5H982M983,303.5H984M985.5,294V336M984,304.5H985M986,325.5H987M994.5,204V257M993,217.5H994M995,243.5H996M997.5,166V267M996,191.5H997M998,241.5H999M1003.5,212V262M1002,224.5H1003M1004,249.5H1005M1009.5,181V225M1008,192.5H1009M1010,213.5H1011M1015.5,196V226M1014,203.5H1015M1016,218.5H1017M1018.5,211V291M1017,231.5H1018M1019,270.5H1020M1021.5,256V315M1020,270.5H1021M1022,300.5H1023M1024.5,264V299M1023,272.5H1024M1025,290.5H1026M1030.5,254V297M1029,264.5H1030M1031,286.5H1032M1033.5,288V361M1032,306.5H1033M1034,342.5H1035M1036.5,330V398M1035,347.5H1036M1037,380.5H1038M1046.5,361V430M1045,378.5H1046M1047,412.5H1048M1049.5,400V492M1048,423.5H1049M1050,468.5H1051M1052.5,467V498M1051,474.5H1052M1053,490.5H1054M1055.5,491V560M1054,508.5H1055M1056,542.5H1057M1064.5,473V517M1063,484.5H1064M1065,505.5H1066M1067.5,480V516M1066,489.5H1067M1068,506.5H1069M1070.5,515V556M1069,525.5H1070M1071,545.5H1072M1079.5,509V524M1078,512.5H1079M1080,520.5H1081M1082.5,518V540M1081,523.5H1082M1083,534.5H1084M1085.5,524V591M1084,540.5H1085M1086,574.5H1087M1091.5,566V606M1090,576.5H1091M1092,595.5H1093M1094.5,598V634M1093,607.5H1094M1095,624.5H1096M1100.5,598V614M1099,602.5H1100M1101,609.5H1102M1103.5,599V612M1102,602.5H1103M1104,608.5H1105M1106.5,608V624M1105,612.5H1106M1107,619.5H1108M1115.5,602V613M1114,604.5H1115M1116,610.5H1117M1127.5,570V587M1126,574.5H1127M1128,582.5H1129M1133.5,571V594M1132,576.5H1133M1134,588.5H1135M1136.5,588V595M1135,590.5H1136M1137,592.5H1138M1145.5,574V587M1144,577.5H1145M1146,583.5H1147M1148.5,573V585M1147,576.5H1148M1149,581.5H1150M1151.5,579V590M1150,582.5H1151M1152,586.5H1153M1154.5,582V588M1153,583.5H1154M1155,586.5H1156M1166.5,574V589M1165,578.5H1166M1167,584.5H1168M1172.5,583V594M1171,586.5H1172M1173,590.5H1174M1184.5,577V584M1183,578.5H1184M1185,582.5H1186M1223.5,485V520M1222,494.5H1223M1224,510.5H1225M1229.5,503V522M1228,508.5H1229M1230,516.5H1231M1247.5,447V464M1246,451.5H1247M1248,459.5H1249M1250.5,442V475M1249,450.5H1250M1251,466.5H1252M1277.5,322V397M1276,340.5H1277M1278,378.5H1279M1280.5,348V406M1279,362.5H1280M1281,391.5H1282M1283.5,363V452M1282,385.5H1283M1284,429.5H1285M1286.5,391V424M1285,399.5H1286M1287,415.5H1288M1299.5,344V399M1298,358.5H1299M1300,384.5H1301M1302.5,380V413M1301,388.5H1302M1303,404.5H1304M1308.5,398V474M1307,417.5H1308M1309,454.5H1310M1311.5,452V547M1310,476.5H1311M1312,522.5H1313M1317.5,498V527M1316,505.5H1317M1318,519.5H1319M1320.5,493V532M1319,502.5H1320M1321,522.5H1322M1323.5,496V535M1322,506.5H1323M1324,524.5H1325M1335.5,483V505M1334,488.5H1335M1336,499.5H1337M1347.5,446V478M1346,454.5H1347M1348,469.5H1349M1350.5,464V487M1349,470.5H1350M1351,480.5H1352M1356.5,458V480M1355,463.5H1356M1357,474.5H1358M1365.5,433V464M1364,440.5H1365M1366,456.5H1367M1368.5,458V482M1367,464.5H1368M1369,475.5H1370M1371.5,457V480M1370,462.5H1371M1372,474.5H1373M1377.5,452V476M1376,458.5H1377M1378,469.5H1379M1383.5,452V471M1382,456.5H1383M1384,466.5H1385M1386.5,461V475M1385,464.5H1386M1387,471.5H1388M1398.5,445V470M1397,451.5H1398M1399,463.5H1400M1404.5,434V451M1403,438.5H1404M1405,446.5H1406M1407.5,443V466M1406,448.5H1407M1408,460.5H1409M1410.5,447V482M1409,456.5H1410M1411,472.5H1412M1413.5,482V520M1412,491.5H1413M1414,510.5H1415M1416.5,492V519M1415,498.5H1416M1417,512.5H1418M1431.5,467V484M1430,471.5H1431M1432,479.5H1433M1437.5,479V502M1436,484.5H1437M1438,496.5H1439M1440.5,498V513M1439,502.5H1440M1441,508.5H1442M1449.5,490V503M1448,493.5H1449M1450,499.5H1451M1455.5,483V499M1454,487.5H1455M1456,494.5H1457M1473.5,456V474M1472,460.5H1473M1474,469.5H1475M1479.5,458V476M1478,462.5H1479M1480,471.5H1481M1482.5,454V470M1481,458.5H1482M1483,465.5H1484M1485.5,459V472M1484,462.5H1485M1486,468.5H1487M1500.5,427V447M1499,432.5H1500M1501,441.5H1502M1503.5,442V454M1502,445.5H1503M1504,450.5H1505M1509.5,440V461M1508,445.5H1509M1510,455.5H1511M1515.5,456V468M1514,459.5H1515M1516,464.5H1517M1527.5,456V484M1526,463.5H1527M1528,476.5H1529M1533.5,456V473M1532,460.5H1533M1534,468.5H1535M1537.5,458V500M1536,468.5H1537M1538,489.5H1539M1546.5,456V467M1545,458.5H1546M1547,464.5H1548M1552.5,448V474M1551,454.5H1552M1553,467.5H1554M1555.5,464V480M1554,468.5H1555M1556,475.5H1557M1558.5,465V495M1557,472.5H1558M1559,487.5H1560M1561.5,478V501M1560,484.5H1561M1562,494.5H1563M1570.5,473V491M1569,477.5H1570M1571,486.5H1572M1573.5,490V506M1572,494.5H1573M1574,501.5H1575M1588.5,461V482M1587,466.5H1588M1589,476.5H1590M1600.5,447V469M1599,452.5H1600M1601,463.5H1602M1612.5,436V449M1611,439.5H1612M1613,445.5H1614M1615.5,439V447M1614,441.5H1615M1616,444.5H1617" stroke="#ff0000" stroke-width="1" fill="none"/>
<line x1="913" y1="439.3" x2="1622" y2="439.3" stroke="#ff0000" stroke-width="4.5" stroke-dasharray="7,7"/>
<line x1="997" y1="167" x2="1620" y2="438" stroke="#0000ff" stroke-width="4.6" stroke-dasharray="7.5,6.5"/>
<line x1="1278.7" y1="321.5" x2="1620" y2="480" stroke="#ff0000" stroke-width="3.3" stroke-dasharray="7,5"/>
<line x1="1314.4" y1="547.3" x2="1620" y2="487" stroke="#ff0000" stroke-width="2.8" stroke-dasharray="6.5,5.5"/>
<line x1="1094.5" y1="633.3" x2="1620" y2="493" stroke="#ff0000" stroke-width="2.8" stroke-dasharray="6.5,5.5"/>
<line x1="1510" y1="241.6" x2="1616" y2="241.6" stroke="#000" stroke-width="2" stroke-dasharray="5,5"/>
<text x="1127.3" y="209.6" font-size="17" fill="#000" stroke="#000" stroke-width="0.3">A</text>
<text x="1350.3" y="379.8" font-size="17" fill="#000" stroke="#000" stroke-width="0.3">B</text>
<text x="1368.3" y="526.7" font-size="17" fill="#000" stroke="#000" stroke-width="0.3">B</text>
<text x="1223.1" y="622.9" font-size="17" fill="#000" stroke="#000" stroke-width="0.3">A</text>
<text x="1523.5" y="230.8" font-size="17" fill="#000" stroke="#000" stroke-width="0.3">Ziel 1</text>
</g>
<g clip-path="url(#cM)">
<polygon points="979.5,716.1 980.0,715.9 980.5,716.3 981.0,716.8 981.5,717.2 982.0,717.7 982.5,718.2 983.0,718.6 983.5,719.1 984.0,719.5 984.5,720.0 985.0,720.4 985.5,720.9 986.0,721.3 986.5,721.8 987.0,722.2 987.5,722.7 988.0,723.1 988.5,723.6 989.0,719.4 989.5,715.2 990.0,711.0 990.5,711.1 991.0,711.1 991.5,711.2 992.0,711.2 992.5,711.3 993.0,711.3 993.5,711.4 994.0,711.5 994.5,711.5 995.0,711.6 995.5,711.6 996.0,711.7 996.5,711.7 997.0,711.8 997.5,711.7 998.0,711.6 998.5,711.6 999.0,711.5 999.5,711.4 1000.0,711.3 1000.5,711.2 1001.0,711.1 1001.5,711.1 1002.0,711.0 1002.5,711.0 1003.0,711.0 1003.5,711.0 1004.0,711.0 1004.5,711.0 1005.0,711.0 1005.5,711.0 1006.0,711.0 1006.5,711.0 1007.0,711.0 1007.5,711.0 1008.0,711.0 1008.5,711.8 1009.0,712.8 1009.5,713.8 1010.0,714.8 1010.5,715.8 1011.0,716.8 1011.5,717.8 1012.0,718.8 1012.5,719.8 1012.5,719.7 1012.0,719.7 1011.5,719.7 1011.0,719.7 1010.5,719.7 1010.0,719.7 1009.5,719.7 1009.0,719.7 1008.5,719.7 1008.0,719.7 1007.5,719.9 1007.0,720.1 1006.5,720.3 1006.0,720.5 1005.5,720.7 1005.0,720.9 1004.5,721.1 1004.0,721.3 1003.5,721.5 1003.0,721.7 1002.5,721.9 1002.0,722.1 1001.5,722.3 1001.0,722.5 1000.5,722.7 1000.0,723.0 999.5,723.4 999.0,723.8 998.5,724.2 998.0,724.6 997.5,725.0 997.0,725.4 996.5,725.8 996.0,726.2 995.5,726.6 995.0,727.0 994.5,727.3 994.0,727.7 993.5,728.1 993.0,728.5 992.5,728.9 992.0,729.3 991.5,729.7 991.0,730.1 990.5,730.5 990.0,730.9 989.5,731.3 989.0,731.6 988.5,731.9 988.0,732.1 987.5,732.4 987.0,732.7 986.5,733.0 986.0,733.2 985.5,733.5 985.0,733.8 984.5,734.0 984.0,734.3 983.5,734.6 983.0,734.8 982.5,735.1 982.0,735.4 981.5,735.7 981.0,735.9 980.5,736.2 980.0,736.5 979.5,736.7" fill="rgba(60,200,60,0.65)"/>
<polygon points="1012.5,719.8 1013.0,720.8 1013.5,721.8 1014.0,722.8 1014.5,724.1 1015.0,726.5 1015.5,728.9 1016.0,731.4 1016.5,733.8 1017.0,736.2 1017.5,738.6 1018.0,741.0 1018.5,743.5 1019.0,745.8 1019.5,748.2 1020.0,750.6 1020.5,753.0 1021.0,755.4 1021.5,757.8 1022.0,760.1 1022.5,762.5 1023.0,764.9 1023.5,767.3 1024.0,769.0 1024.5,768.1 1025.0,767.2 1025.5,766.3 1026.0,765.4 1026.5,764.4 1027.0,763.5 1027.5,762.6 1028.0,761.7 1028.5,760.8 1029.0,760.9 1029.5,761.3 1030.0,761.7 1030.5,762.1 1031.0,762.5 1031.5,762.8 1032.0,764.6 1032.5,767.3 1033.0,769.9 1033.5,772.6 1034.0,775.3 1034.5,778.0 1035.0,780.6 1035.5,783.3 1036.0,786.0 1036.5,788.2 1037.0,788.5 1037.5,788.9 1038.0,789.3 1038.5,789.7 1039.0,790.1 1039.5,790.4 1040.0,789.9 1040.5,789.1 1041.0,788.4 1041.5,787.6 1042.0,786.9 1042.5,786.1 1043.0,787.1 1043.5,789.3 1044.0,791.5 1044.5,793.7 1045.0,795.8 1045.5,798.0 1046.0,800.2 1046.5,802.4 1047.0,804.6 1047.5,806.8 1048.0,808.9 1048.5,811.1 1049.0,813.3 1049.5,814.9 1050.0,816.6 1050.5,818.2 1051.0,819.9 1051.5,821.5 1052.0,823.2 1052.5,824.8 1053.0,826.5 1053.5,828.1 1054.0,829.8 1054.5,831.4 1055.0,829.0 1055.5,826.6 1056.0,824.3 1056.5,821.9 1057.0,819.5 1057.5,817.1 1058.0,814.7 1058.5,812.4 1059.0,810.0 1059.5,807.6 1060.0,805.2 1060.5,802.8 1061.0,800.5 1061.5,798.1 1062.0,796.9 1062.5,795.9 1063.0,795.0 1063.5,794.1 1064.0,793.2 1064.5,792.2 1065.0,791.3 1065.5,790.4 1066.0,789.5 1066.0,789.6 1065.5,789.4 1065.0,789.2 1064.5,789.0 1064.0,788.8 1063.5,788.6 1063.0,788.3 1062.5,788.1 1062.0,787.9 1061.5,787.7 1061.0,787.5 1060.5,787.3 1060.0,787.1 1059.5,786.9 1059.0,786.7 1058.5,786.5 1058.0,786.0 1057.5,785.5 1057.0,785.0 1056.5,784.5 1056.0,784.0 1055.5,783.5 1055.0,783.0 1054.5,782.6 1054.0,782.1 1053.5,781.6 1053.0,781.1 1052.5,780.6 1052.0,780.1 1051.5,779.6 1051.0,779.1 1050.5,778.5 1050.0,777.4 1049.5,776.3 1049.0,775.2 1048.5,774.1 1048.0,773.0 1047.5,771.9 1047.0,770.8 1046.5,769.7 1046.0,768.6 1045.5,767.6 1045.0,766.5 1044.5,765.4 1044.0,764.3 1043.5,763.2 1043.0,762.1 1042.5,761.0 1042.0,759.9 1041.5,758.8 1041.0,757.7 1040.5,756.6 1040.0,755.5 1039.5,754.4 1039.0,753.4 1038.5,752.3 1038.0,751.2 1037.5,750.1 1037.0,749.0 1036.5,747.9 1036.0,746.8 1035.5,745.7 1035.0,744.6 1034.5,743.5 1034.0,742.4 1033.5,741.3 1033.0,740.6 1032.5,740.0 1032.0,739.4 1031.5,738.8 1031.0,738.3 1030.5,737.7 1030.0,737.1 1029.5,736.5 1029.0,736.0 1028.5,735.4 1028.0,734.8 1027.5,734.3 1027.0,733.7 1026.5,733.1 1026.0,732.5 1025.5,732.0 1025.0,731.4 1024.5,730.8 1024.0,730.2 1023.5,729.7 1023.0,729.1 1022.5,728.5 1022.0,728.0 1021.5,727.4 1021.0,726.9 1020.5,726.3 1020.0,725.8 1019.5,725.3 1019.0,724.7 1018.5,724.2 1018.0,723.6 1017.5,723.1 1017.0,722.5 1016.5,722.0 1016.0,721.4 1015.5,720.9 1015.0,720.4 1014.5,719.8 1014.0,719.7 1013.5,719.7 1013.0,719.7 1012.5,719.7" fill="rgba(225,90,90,0.5)"/>
<polygon points="1066.0,789.5 1066.5,788.9 1067.0,788.9 1067.5,788.9 1068.0,788.9 1068.0,788.7 1067.5,789.0 1067.0,789.3 1066.5,789.6 1066.0,789.6" fill="rgba(60,200,60,0.65)"/>
<polygon points="1068.0,788.9 1068.5,788.9 1069.0,788.9 1069.5,788.9 1070.0,788.9 1070.5,788.5 1071.0,787.4 1071.5,786.4 1071.5,786.7 1071.0,787.0 1070.5,787.3 1070.0,787.6 1069.5,787.9 1069.0,788.2 1068.5,788.5 1068.0,788.7" fill="rgba(225,90,90,0.5)"/>
<polygon points="1071.5,786.4 1072.0,785.3 1072.5,784.3 1073.0,783.2 1073.5,782.2 1074.0,781.1 1074.5,780.1 1075.0,779.0 1075.5,778.0 1076.0,776.9 1076.5,775.9 1077.0,774.8 1077.5,773.8 1078.0,773.0 1078.5,772.2 1079.0,771.4 1079.5,770.6 1080.0,769.8 1080.5,769.0 1081.0,768.2 1081.5,768.4 1082.0,770.2 1082.5,772.0 1083.0,773.7 1083.5,775.5 1084.0,777.3 1084.5,778.8 1085.0,779.0 1085.5,779.3 1086.0,779.6 1086.5,779.9 1087.0,780.2 1087.5,780.5 1088.0,780.8 1088.5,781.2 1089.0,782.2 1089.0,781.3 1088.5,781.2 1088.0,781.2 1087.5,781.1 1087.0,781.0 1086.5,781.1 1086.0,781.2 1085.5,781.3 1085.0,781.5 1084.5,781.6 1084.0,781.7 1083.5,781.8 1083.0,782.0 1082.5,782.1 1082.0,782.2 1081.5,782.4 1081.0,782.5 1080.5,782.6 1080.0,782.7 1079.5,782.9 1079.0,783.0 1078.5,783.1 1078.0,783.2 1077.5,783.4 1077.0,783.6 1076.5,783.9 1076.0,784.2 1075.5,784.5 1075.0,784.8 1074.5,785.0 1074.0,785.3 1073.5,785.6 1073.0,785.9 1072.5,786.2 1072.0,786.5 1071.5,786.7" fill="rgba(60,200,60,0.65)"/>
<polygon points="1089.0,782.2 1089.5,783.2 1090.0,784.2 1090.5,785.2 1091.0,786.2 1091.5,787.2 1092.0,788.2 1092.5,789.2 1093.0,790.2 1093.5,791.2 1094.0,792.2 1094.5,793.2 1095.0,792.8 1095.5,791.6 1096.0,790.3 1096.5,789.1 1097.0,787.8 1097.5,786.6 1098.0,785.3 1098.5,784.1 1099.0,782.8 1099.0,783.0 1098.5,782.9 1098.0,782.8 1097.5,782.7 1097.0,782.6 1096.5,782.5 1096.0,782.4 1095.5,782.3 1095.0,782.2 1094.5,782.1 1094.0,782.0 1093.5,781.9 1093.0,781.8 1092.5,781.7 1092.0,781.7 1091.5,781.6 1091.0,781.5 1090.5,781.5 1090.0,781.4 1089.5,781.3 1089.0,781.3" fill="rgba(225,90,90,0.5)"/>
<polygon points="1099.0,782.8 1099.5,781.7 1100.0,781.0 1100.5,780.3 1101.0,779.6 1101.5,778.9 1102.0,778.3 1102.5,777.6 1103.0,776.9 1103.5,776.2 1104.0,775.5 1104.5,774.8 1105.0,774.2 1105.5,773.5 1106.0,772.7 1106.5,772.0 1107.0,771.2 1107.5,770.5 1108.0,769.7 1108.5,769.0 1109.0,768.2 1109.5,767.5 1110.0,766.7 1110.5,766.0 1111.0,765.3 1111.5,764.6 1112.0,764.0 1112.5,763.3 1113.0,762.6 1113.5,761.9 1114.0,761.3 1114.5,760.6 1115.0,760.0 1115.5,759.3 1116.0,758.7 1116.5,758.0 1117.0,757.4 1117.5,756.8 1118.0,756.1 1118.5,755.5 1119.0,754.8 1119.5,754.0 1120.0,752.7 1120.5,751.4 1121.0,750.1 1121.5,748.8 1122.0,747.5 1122.5,746.2 1123.0,744.9 1123.5,743.5 1124.0,742.2 1124.5,741.6 1125.0,741.5 1125.5,741.3 1126.0,741.2 1126.5,741.0 1127.0,740.9 1127.5,740.7 1128.0,740.6 1128.5,740.4 1129.0,740.3 1129.5,740.2 1130.0,740.4 1130.5,740.8 1131.0,741.2 1131.5,741.7 1132.0,742.1 1132.5,742.5 1133.0,743.0 1133.5,743.4 1134.0,743.9 1134.5,744.3 1135.0,744.7 1135.5,745.2 1136.0,745.6 1136.5,745.4 1137.0,745.1 1137.5,744.9 1138.0,744.6 1138.5,744.4 1139.0,744.1 1139.5,743.9 1140.0,743.6 1140.5,743.4 1141.0,743.1 1141.5,742.9 1142.0,742.6 1142.5,742.6 1143.0,742.7 1143.5,742.9 1144.0,743.1 1144.5,743.2 1145.0,743.4 1145.5,743.6 1146.0,743.7 1146.5,743.9 1147.0,744.0 1147.5,744.2 1148.0,744.4 1148.5,744.5 1149.0,744.7 1149.5,744.8 1150.0,744.9 1150.5,745.0 1151.0,745.1 1151.5,745.2 1152.0,745.3 1152.5,745.4 1153.0,745.5 1153.5,745.7 1154.0,745.8 1154.5,745.9 1155.0,746.0 1155.5,746.1 1156.0,746.2 1156.5,746.3 1157.0,746.4 1157.5,746.4 1158.0,746.3 1158.5,746.3 1159.0,746.2 1159.5,746.2 1160.0,746.1 1160.5,746.1 1161.0,746.0 1161.5,746.0 1162.0,745.9 1162.5,745.9 1163.0,745.8 1163.5,745.8 1164.0,745.7 1164.5,745.7 1165.0,745.6 1165.5,745.8 1166.0,746.0 1166.5,746.2 1167.0,746.4 1167.5,746.6 1168.0,746.8 1168.5,747.0 1169.0,747.2 1169.5,747.4 1170.0,747.6 1170.5,747.8 1170.5,747.7 1170.0,747.8 1169.5,747.9 1169.0,748.0 1168.5,748.1 1168.0,748.2 1167.5,748.3 1167.0,748.4 1166.5,748.5 1166.0,748.6 1165.5,748.7 1165.0,748.8 1164.5,748.9 1164.0,749.0 1163.5,749.0 1163.0,749.1 1162.5,749.2 1162.0,749.3 1161.5,749.3 1161.0,749.4 1160.5,749.5 1160.0,749.5 1159.5,749.6 1159.0,749.7 1158.5,749.8 1158.0,749.8 1157.5,749.9 1157.0,750.0 1156.5,750.1 1156.0,750.1 1155.5,750.2 1155.0,750.3 1154.5,750.3 1154.0,750.4 1153.5,750.6 1153.0,750.7 1152.5,750.9 1152.0,751.0 1151.5,751.2 1151.0,751.4 1150.5,751.5 1150.0,751.7 1149.5,751.8 1149.0,752.0 1148.5,752.1 1148.0,752.3 1147.5,752.4 1147.0,752.6 1146.5,752.8 1146.0,752.9 1145.5,753.1 1145.0,753.2 1144.5,753.4 1144.0,753.5 1143.5,753.7 1143.0,753.8 1142.5,754.0 1142.0,754.1 1141.5,754.3 1141.0,754.6 1140.5,754.9 1140.0,755.1 1139.5,755.4 1139.0,755.7 1138.5,756.0 1138.0,756.3 1137.5,756.6 1137.0,756.8 1136.5,757.1 1136.0,757.4 1135.5,757.7 1135.0,758.0 1134.5,758.2 1134.0,758.5 1133.5,758.8 1133.0,759.1 1132.5,759.4 1132.0,759.7 1131.5,759.9 1131.0,760.2 1130.5,760.5 1130.0,760.8 1129.5,761.1 1129.0,761.3 1128.5,761.8 1128.0,762.3 1127.5,762.8 1127.0,763.3 1126.5,763.8 1126.0,764.3 1125.5,764.8 1125.0,765.3 1124.5,765.8 1124.0,766.2 1123.5,766.7 1123.0,767.2 1122.5,767.7 1122.0,768.2 1121.5,768.7 1121.0,769.2 1120.5,769.7 1120.0,770.2 1119.5,770.7 1119.0,771.2 1118.5,771.6 1118.0,772.1 1117.5,772.5 1117.0,773.0 1116.5,773.4 1116.0,773.8 1115.5,774.3 1115.0,774.7 1114.5,775.2 1114.0,775.6 1113.5,776.1 1113.0,776.5 1112.5,777.0 1112.0,777.4 1111.5,777.9 1111.0,778.3 1110.5,778.8 1110.0,779.2 1109.5,779.7 1109.0,780.1 1108.5,780.4 1108.0,780.6 1107.5,780.8 1107.0,781.0 1106.5,781.2 1106.0,781.4 1105.5,781.6 1105.0,781.8 1104.5,782.0 1104.0,782.2 1103.5,782.4 1103.0,782.6 1102.5,782.8 1102.0,783.0 1101.5,783.2 1101.0,783.4 1100.5,783.3 1100.0,783.2 1099.5,783.1 1099.0,783.0" fill="rgba(60,200,60,0.65)"/>
<polygon points="1170.5,747.8 1171.0,748.0 1171.5,748.2 1172.0,748.4 1172.5,748.6 1173.0,748.8 1173.5,748.6 1174.0,748.4 1174.5,748.2 1175.0,748.0 1175.5,747.8 1176.0,747.6 1176.5,747.4 1177.0,747.2 1177.0,747.5 1176.5,747.4 1176.0,747.4 1175.5,747.4 1175.0,747.3 1174.5,747.3 1174.0,747.3 1173.5,747.2 1173.0,747.2 1172.5,747.3 1172.0,747.4 1171.5,747.5 1171.0,747.6 1170.5,747.7" fill="rgba(225,90,90,0.5)"/>
<polygon points="1177.0,747.2 1177.5,747.0 1178.0,746.9 1178.5,746.7 1179.0,746.5 1179.5,746.3 1180.0,746.1 1180.5,745.9 1181.0,745.7 1181.5,745.5 1182.0,745.3 1182.5,745.1 1183.0,744.9 1183.5,744.7 1184.0,744.5 1184.5,744.3 1185.0,744.1 1185.5,743.9 1186.0,743.7 1186.5,743.5 1187.0,743.3 1187.5,743.2 1188.0,743.1 1188.5,742.9 1189.0,742.8 1189.5,742.7 1190.0,742.5 1190.5,742.4 1191.0,742.3 1191.5,742.1 1192.0,742.0 1192.5,741.9 1193.0,741.7 1193.5,741.6 1194.0,741.5 1194.5,741.3 1195.0,741.2 1195.5,741.1 1196.0,741.0 1196.5,740.8 1197.0,740.7 1197.5,740.6 1198.0,740.5 1198.5,740.3 1199.0,740.2 1199.5,740.1 1200.0,740.0 1200.5,739.9 1201.0,739.7 1201.5,739.6 1202.0,739.5 1202.5,739.4 1203.0,739.0 1203.5,738.3 1204.0,737.7 1204.5,737.0 1205.0,736.3 1205.5,735.6 1206.0,734.9 1206.5,734.2 1207.0,733.6 1207.5,732.9 1208.0,732.2 1208.5,731.5 1209.0,730.8 1209.5,730.3 1210.0,729.8 1210.5,729.3 1211.0,728.8 1211.5,728.3 1212.0,727.8 1212.5,727.3 1213.0,726.8 1213.5,726.3 1214.0,725.8 1214.5,725.3 1215.0,724.8 1215.5,724.3 1216.0,723.9 1216.5,723.5 1217.0,723.1 1217.5,722.7 1218.0,722.3 1218.5,721.9 1219.0,721.5 1219.5,721.1 1220.0,720.7 1220.5,721.0 1221.0,722.0 1221.5,722.9 1222.0,723.8 1222.5,724.7 1223.0,725.6 1223.5,726.5 1224.0,727.5 1224.5,728.4 1225.0,729.2 1225.5,729.8 1226.0,730.4 1226.5,731.0 1227.0,731.6 1227.5,732.1 1228.0,732.7 1228.5,733.3 1229.0,733.9 1229.0,733.9 1228.5,733.9 1228.0,733.9 1227.5,734.0 1227.0,734.0 1226.5,734.1 1226.0,734.1 1225.5,734.1 1225.0,734.2 1224.5,734.2 1224.0,734.3 1223.5,734.3 1223.0,734.4 1222.5,734.4 1222.0,734.4 1221.5,734.5 1221.0,734.5 1220.5,734.6 1220.0,734.7 1219.5,735.0 1219.0,735.3 1218.5,735.6 1218.0,735.9 1217.5,736.2 1217.0,736.5 1216.5,736.7 1216.0,737.0 1215.5,737.3 1215.0,737.6 1214.5,737.9 1214.0,738.2 1213.5,738.5 1213.0,738.8 1212.5,739.1 1212.0,739.3 1211.5,739.6 1211.0,739.9 1210.5,740.2 1210.0,740.4 1209.5,740.6 1209.0,740.8 1208.5,741.1 1208.0,741.3 1207.5,741.5 1207.0,741.7 1206.5,741.9 1206.0,742.2 1205.5,742.4 1205.0,742.6 1204.5,742.8 1204.0,743.0 1203.5,743.2 1203.0,743.5 1202.5,743.7 1202.0,743.9 1201.5,744.1 1201.0,744.3 1200.5,744.6 1200.0,744.8 1199.5,745.0 1199.0,745.2 1198.5,745.4 1198.0,745.6 1197.5,745.7 1197.0,745.8 1196.5,745.9 1196.0,746.0 1195.5,746.1 1195.0,746.2 1194.5,746.3 1194.0,746.4 1193.5,746.5 1193.0,746.6 1192.5,746.7 1192.0,746.8 1191.5,746.9 1191.0,747.0 1190.5,747.0 1190.0,747.1 1189.5,747.2 1189.0,747.3 1188.5,747.4 1188.0,747.5 1187.5,747.6 1187.0,747.7 1186.5,747.8 1186.0,747.9 1185.5,748.0 1185.0,748.0 1184.5,747.9 1184.0,747.9 1183.5,747.9 1183.0,747.8 1182.5,747.8 1182.0,747.8 1181.5,747.7 1181.0,747.7 1180.5,747.7 1180.0,747.7 1179.5,747.6 1179.0,747.6 1178.5,747.6 1178.0,747.5 1177.5,747.5 1177.0,747.5" fill="rgba(60,200,60,0.65)"/>
<polygon points="1229.0,733.9 1229.5,734.5 1230.0,734.8 1230.5,735.0 1231.0,735.2 1231.5,735.4 1232.0,735.6 1232.5,735.9 1233.0,736.1 1233.5,736.3 1234.0,736.5 1234.5,736.7 1235.0,737.0 1235.5,736.5 1236.0,736.0 1236.5,735.4 1237.0,734.8 1237.5,734.3 1238.0,733.7 1238.0,733.8 1237.5,733.8 1237.0,733.8 1236.5,733.8 1236.0,733.8 1235.5,733.8 1235.0,733.8 1234.5,733.8 1234.0,733.8 1233.5,733.8 1233.0,733.8 1232.5,733.8 1232.0,733.8 1231.5,733.8 1231.0,733.8 1230.5,733.8 1230.0,733.8 1229.5,733.8 1229.0,733.9" fill="rgba(225,90,90,0.5)"/>
<polygon points="1238.0,733.7 1238.5,733.1 1239.0,732.5 1239.5,732.0 1240.0,731.4 1240.5,730.8 1241.0,730.1 1241.5,729.3 1242.0,728.6 1242.5,727.8 1243.0,727.1 1243.5,726.3 1244.0,725.6 1244.5,724.8 1245.0,724.1 1245.5,723.6 1246.0,723.6 1246.5,723.6 1247.0,723.6 1247.5,723.6 1248.0,723.6 1248.5,723.6 1249.0,724.5 1249.5,725.5 1250.0,726.4 1250.5,727.3 1251.0,728.2 1251.5,729.2 1252.0,730.1 1252.5,731.0 1253.0,731.9 1253.0,731.1 1252.5,731.2 1252.0,731.2 1251.5,731.2 1251.0,731.3 1250.5,731.3 1250.0,731.4 1249.5,731.4 1249.0,731.5 1248.5,731.5 1248.0,731.6 1247.5,731.8 1247.0,731.9 1246.5,732.1 1246.0,732.2 1245.5,732.4 1245.0,732.5 1244.5,732.7 1244.0,732.8 1243.5,733.0 1243.0,733.1 1242.5,733.2 1242.0,733.4 1241.5,733.5 1241.0,733.7 1240.5,733.8 1240.0,733.8 1239.5,733.8 1239.0,733.8 1238.5,733.8 1238.0,733.8" fill="rgba(60,200,60,0.65)"/>
<polygon points="1253.0,731.9 1253.5,731.7 1254.0,730.7 1254.0,731.0 1253.5,731.1 1253.0,731.1" fill="rgba(225,90,90,0.5)"/>
<polygon points="1254.0,730.7 1254.5,729.7 1255.0,728.7 1255.5,727.7 1256.0,726.6 1256.5,725.6 1257.0,724.6 1257.5,723.6 1258.0,722.7 1258.5,722.1 1259.0,721.5 1259.5,720.9 1260.0,720.3 1260.5,719.8 1261.0,719.2 1261.5,718.6 1262.0,718.0 1262.5,717.4 1263.0,716.8 1263.5,716.2 1264.0,715.6 1264.5,715.1 1265.0,714.5 1265.5,713.9 1266.0,713.3 1266.5,712.7 1267.0,712.8 1267.5,713.0 1268.0,713.2 1268.5,713.4 1269.0,713.6 1269.5,713.8 1270.0,714.0 1270.5,714.2 1271.0,714.4 1271.5,714.6 1272.0,714.9 1272.5,713.9 1273.0,712.6 1273.5,711.4 1274.0,710.1 1274.5,708.9 1275.0,707.6 1275.5,707.7 1276.0,708.7 1276.5,709.7 1277.0,710.7 1277.5,711.7 1278.0,712.7 1278.5,713.7 1279.0,714.7 1279.5,715.7 1280.0,716.7 1280.5,717.7 1281.0,719.6 1281.5,722.0 1281.5,720.5 1281.0,720.5 1280.5,720.5 1280.0,720.5 1279.5,720.5 1279.0,720.5 1278.5,720.5 1278.0,720.5 1277.5,720.5 1277.0,720.5 1276.5,720.6 1276.0,720.9 1275.5,721.1 1275.0,721.4 1274.5,721.6 1274.0,721.9 1273.5,722.1 1273.0,722.4 1272.5,722.6 1272.0,722.9 1271.5,723.2 1271.0,723.4 1270.5,723.7 1270.0,723.9 1269.5,724.2 1269.0,724.4 1268.5,724.7 1268.0,724.9 1267.5,725.2 1267.0,725.4 1266.5,725.7 1266.0,726.0 1265.5,726.3 1265.0,726.6 1264.5,726.9 1264.0,727.2 1263.5,727.5 1263.0,727.7 1262.5,728.0 1262.0,728.3 1261.5,728.6 1261.0,728.9 1260.5,729.2 1260.0,729.5 1259.5,729.8 1259.0,730.1 1258.5,730.4 1258.0,730.6 1257.5,730.7 1257.0,730.8 1256.5,730.8 1256.0,730.9 1255.5,730.9 1255.0,730.9 1254.5,731.0 1254.0,731.0" fill="rgba(60,200,60,0.65)"/>
<polygon points="1281.5,722.0 1282.0,724.5 1282.5,727.0 1283.0,729.4 1283.5,731.9 1284.0,734.4 1284.5,736.8 1285.0,738.7 1285.5,740.1 1286.0,741.5 1286.5,742.9 1287.0,744.4 1287.5,745.8 1288.0,747.2 1288.5,748.6 1289.0,750.1 1289.5,751.5 1290.0,752.9 1290.5,752.4 1291.0,750.6 1291.5,748.8 1292.0,747.0 1292.5,745.2 1293.0,743.4 1293.5,741.6 1294.0,739.7 1294.5,737.9 1295.0,736.1 1295.5,734.3 1296.0,732.5 1296.5,730.7 1297.0,732.3 1297.5,733.8 1298.0,735.4 1298.5,737.0 1299.0,738.6 1299.5,740.1 1300.0,741.7 1300.5,742.6 1301.0,743.6 1301.5,744.5 1302.0,745.4 1302.5,746.3 1303.0,747.3 1303.5,748.2 1304.0,749.1 1304.5,750.0 1305.0,751.0 1305.5,751.9 1306.0,755.6 1306.5,759.3 1307.0,763.1 1307.5,766.8 1308.0,770.5 1308.5,774.2 1309.0,777.9 1309.5,781.6 1310.0,785.4 1310.5,789.1 1311.0,792.8 1311.5,793.2 1312.0,793.5 1312.5,793.9 1313.0,794.3 1313.5,794.7 1314.0,795.0 1314.5,794.9 1315.0,794.3 1315.5,793.8 1316.0,793.2 1316.5,792.7 1317.0,792.2 1317.5,791.6 1318.0,791.1 1318.5,790.5 1319.0,790.0 1319.5,789.4 1320.0,788.9 1320.5,788.4 1321.0,787.8 1321.5,787.3 1322.0,786.7 1322.5,786.2 1323.0,785.7 1323.5,785.1 1324.0,783.9 1324.5,782.5 1325.0,781.1 1325.5,779.7 1326.0,778.3 1326.5,776.9 1327.0,775.5 1327.5,774.1 1328.0,772.7 1328.5,771.3 1329.0,769.9 1329.5,768.5 1330.0,767.1 1330.5,765.7 1331.0,764.3 1331.0,764.4 1330.5,764.3 1330.0,764.2 1329.5,764.1 1329.0,764.0 1328.5,763.9 1328.0,763.8 1327.5,763.7 1327.0,763.6 1326.5,763.5 1326.0,763.4 1325.5,763.2 1325.0,763.1 1324.5,763.0 1324.0,762.9 1323.5,762.8 1323.0,762.7 1322.5,762.6 1322.0,762.5 1321.5,762.4 1321.0,762.3 1320.5,762.2 1320.0,761.3 1319.5,760.4 1319.0,759.5 1318.5,758.5 1318.0,757.6 1317.5,756.7 1317.0,755.8 1316.5,754.9 1316.0,754.0 1315.5,753.0 1315.0,752.1 1314.5,751.2 1314.0,750.3 1313.5,749.4 1313.0,748.5 1312.5,747.5 1312.0,746.6 1311.5,745.7 1311.0,744.8 1310.5,744.1 1310.0,743.3 1309.5,742.6 1309.0,741.9 1308.5,741.2 1308.0,740.4 1307.5,739.7 1307.0,739.0 1306.5,738.2 1306.0,737.5 1305.5,736.8 1305.0,736.1 1304.5,735.8 1304.0,735.4 1303.5,735.1 1303.0,734.7 1302.5,734.4 1302.0,734.0 1301.5,733.7 1301.0,733.3 1300.5,733.0 1300.0,732.6 1299.5,732.3 1299.0,731.9 1298.5,731.5 1298.0,731.2 1297.5,730.8 1297.0,730.6 1296.5,730.5 1296.0,730.4 1295.5,730.2 1295.0,730.1 1294.5,730.0 1294.0,729.9 1293.5,729.7 1293.0,729.6 1292.5,729.5 1292.0,729.4 1291.5,729.2 1291.0,729.1 1290.5,728.6 1290.0,728.2 1289.5,727.7 1289.0,727.3 1288.5,726.8 1288.0,726.4 1287.5,725.9 1287.0,725.5 1286.5,725.0 1286.0,724.6 1285.5,724.1 1285.0,723.7 1284.5,723.2 1284.0,722.8 1283.5,722.3 1283.0,721.9 1282.5,721.4 1282.0,721.0 1281.5,720.5" fill="rgba(225,90,90,0.5)"/>
<polygon points="1331.0,764.3 1331.5,762.9 1332.0,762.2 1332.5,761.5 1333.0,760.8 1333.5,760.1 1334.0,759.4 1334.5,758.7 1335.0,758.0 1335.5,757.1 1336.0,755.9 1336.5,754.6 1337.0,753.3 1337.5,752.0 1338.0,750.7 1338.5,749.5 1339.0,748.2 1339.5,746.9 1340.0,745.6 1340.5,744.3 1341.0,743.2 1341.5,742.7 1342.0,742.2 1342.5,741.7 1343.0,741.1 1343.5,740.6 1344.0,740.1 1344.5,739.6 1345.0,739.6 1345.5,740.2 1346.0,740.8 1346.5,741.5 1347.0,742.1 1347.5,742.7 1348.0,743.4 1348.5,744.0 1349.0,744.6 1349.5,745.3 1350.0,745.9 1350.5,746.3 1351.0,746.0 1351.5,745.8 1352.0,745.5 1352.5,745.2 1353.0,744.9 1353.5,744.6 1354.0,744.3 1354.5,743.8 1355.0,743.2 1355.5,742.5 1356.0,741.9 1356.5,741.2 1357.0,740.6 1357.5,739.9 1358.0,739.3 1358.5,738.6 1359.0,738.0 1359.5,737.3 1360.0,736.7 1360.5,736.0 1361.0,735.4 1361.5,734.7 1362.0,734.1 1362.5,734.3 1363.0,735.2 1363.5,736.1 1364.0,736.9 1364.5,737.8 1365.0,738.7 1365.5,739.6 1366.0,740.4 1366.5,741.3 1367.0,742.2 1367.5,743.0 1368.0,743.9 1368.5,744.8 1369.0,745.7 1369.5,746.5 1370.0,747.4 1370.5,748.3 1370.5,747.3 1370.0,747.4 1369.5,747.6 1369.0,747.7 1368.5,747.9 1368.0,748.1 1367.5,748.2 1367.0,748.4 1366.5,748.5 1366.0,748.7 1365.5,748.8 1365.0,749.0 1364.5,749.1 1364.0,749.3 1363.5,749.4 1363.0,749.6 1362.5,749.7 1362.0,749.9 1361.5,750.1 1361.0,750.2 1360.5,750.4 1360.0,750.6 1359.5,750.7 1359.0,750.9 1358.5,751.1 1358.0,751.2 1357.5,751.4 1357.0,751.5 1356.5,751.7 1356.0,751.9 1355.5,752.0 1355.0,752.2 1354.5,752.4 1354.0,752.5 1353.5,752.7 1353.0,753.0 1352.5,753.2 1352.0,753.5 1351.5,753.7 1351.0,754.0 1350.5,754.2 1350.0,754.5 1349.5,754.7 1349.0,755.0 1348.5,755.2 1348.0,755.5 1347.5,755.7 1347.0,756.0 1346.5,756.2 1346.0,756.5 1345.5,756.7 1345.0,757.0 1344.5,757.2 1344.0,757.5 1343.5,757.7 1343.0,758.0 1342.5,758.2 1342.0,758.5 1341.5,758.8 1341.0,759.1 1340.5,759.3 1340.0,759.6 1339.5,759.9 1339.0,760.2 1338.5,760.5 1338.0,760.8 1337.5,761.1 1337.0,761.4 1336.5,761.6 1336.0,761.9 1335.5,762.2 1335.0,762.5 1334.5,762.8 1334.0,763.1 1333.5,763.4 1333.0,763.6 1332.5,763.9 1332.0,764.2 1331.5,764.5 1331.0,764.4" fill="rgba(60,200,60,0.65)"/>
<polygon points="1370.5,748.3 1371.0,748.6 1371.5,748.1 1372.0,747.6 1372.5,747.1 1372.5,747.2 1372.0,747.2 1371.5,747.2 1371.0,747.2 1370.5,747.3" fill="rgba(225,90,90,0.5)"/>
<polygon points="1372.5,747.1 1373.0,746.6 1373.5,746.1 1374.0,745.6 1374.5,746.0 1375.0,746.4 1375.5,746.8 1376.0,747.1 1376.5,747.5 1376.5,747.2 1376.0,747.2 1375.5,747.2 1375.0,747.2 1374.5,747.2 1374.0,747.2 1373.5,747.2 1373.0,747.2 1372.5,747.2" fill="rgba(60,200,60,0.65)"/>
<polygon points="1376.5,747.5 1377.0,747.9 1377.5,747.8 1378.0,747.6 1378.5,747.4 1379.0,747.2 1379.5,747.0 1379.5,747.2 1379.0,747.2 1378.5,747.2 1378.0,747.2 1377.5,747.2 1377.0,747.2 1376.5,747.2" fill="rgba(225,90,90,0.5)"/>
<polygon points="1379.5,747.0 1380.0,746.8 1380.5,746.6 1381.0,746.4 1381.5,746.4 1382.0,746.4 1382.5,746.4 1383.0,746.4 1383.5,746.5 1384.0,747.0 1384.5,747.5 1384.5,747.2 1384.0,747.2 1383.5,747.2 1383.0,747.2 1382.5,747.2 1382.0,747.2 1381.5,747.2 1381.0,747.2 1380.5,747.2 1380.0,747.2 1379.5,747.2" fill="rgba(60,200,60,0.65)"/>
<polygon points="1384.5,747.5 1385.0,748.1 1385.5,748.6 1386.0,749.1 1386.5,749.6 1387.0,748.8 1387.5,748.0 1388.0,747.1 1388.0,747.2 1387.5,747.2 1387.0,747.2 1386.5,747.2 1386.0,747.2 1385.5,747.2 1385.0,747.2 1384.5,747.2" fill="rgba(225,90,90,0.5)"/>
<polygon points="1388.0,747.1 1388.5,746.3 1389.0,745.5 1389.5,744.7 1390.0,743.8 1390.5,743.0 1391.0,742.2 1391.5,741.5 1392.0,741.1 1392.5,740.7 1393.0,740.3 1393.5,740.0 1394.0,739.6 1394.5,739.2 1395.0,738.8 1395.5,738.7 1396.0,739.0 1396.5,739.2 1397.0,739.5 1397.5,739.7 1398.0,740.0 1398.5,739.9 1399.0,739.3 1399.5,738.8 1400.0,738.2 1400.5,737.6 1401.0,737.1 1401.5,736.5 1402.0,737.1 1402.5,737.7 1403.0,738.3 1403.5,738.8 1404.0,739.4 1404.5,740.0 1405.0,740.6 1405.5,741.2 1406.0,741.8 1406.5,742.3 1407.0,742.9 1407.5,743.5 1408.0,744.1 1408.5,744.7 1408.5,744.1 1408.0,744.1 1407.5,744.1 1407.0,744.1 1406.5,744.1 1406.0,744.1 1405.5,744.1 1405.0,744.1 1404.5,744.1 1404.0,744.1 1403.5,744.2 1403.0,744.3 1402.5,744.4 1402.0,744.6 1401.5,744.7 1401.0,744.8 1400.5,744.9 1400.0,745.0 1399.5,745.2 1399.0,745.3 1398.5,745.4 1398.0,745.5 1397.5,745.6 1397.0,745.8 1396.5,745.9 1396.0,746.0 1395.5,746.1 1395.0,746.3 1394.5,746.4 1394.0,746.5 1393.5,746.5 1393.0,746.6 1392.5,746.6 1392.0,746.7 1391.5,746.8 1391.0,746.8 1390.5,746.9 1390.0,747.0 1389.5,747.0 1389.0,747.1 1388.5,747.1 1388.0,747.2" fill="rgba(60,200,60,0.65)"/>
<polygon points="1408.5,744.7 1409.0,746.0 1409.5,747.4 1410.0,748.9 1410.5,750.4 1411.0,751.8 1411.5,753.3 1412.0,754.8 1412.5,756.2 1413.0,757.7 1413.5,759.2 1414.0,760.7 1414.5,762.1 1415.0,763.6 1415.5,765.1 1416.0,766.5 1416.5,767.6 1417.0,767.0 1417.5,766.3 1418.0,765.7 1418.5,765.1 1419.0,764.5 1419.5,763.8 1420.0,763.2 1420.5,762.6 1421.0,762.0 1421.5,761.4 1422.0,760.7 1422.5,760.1 1423.0,759.5 1423.5,758.9 1424.0,758.3 1424.5,757.6 1425.0,757.0 1425.5,756.4 1426.0,755.7 1426.5,755.0 1427.0,754.2 1427.5,753.5 1428.0,752.7 1428.5,752.0 1429.0,751.2 1429.0,751.9 1428.5,751.9 1428.0,752.0 1427.5,752.0 1427.0,752.1 1426.5,752.1 1426.0,752.2 1425.5,752.2 1425.0,752.2 1424.5,752.3 1424.0,752.3 1423.5,752.4 1423.0,752.4 1422.5,752.5 1422.0,752.5 1421.5,752.5 1421.0,752.6 1420.5,752.6 1420.0,752.7 1419.5,752.6 1419.0,752.2 1418.5,751.7 1418.0,751.3 1417.5,750.8 1417.0,750.3 1416.5,749.9 1416.0,749.4 1415.5,749.0 1415.0,748.5 1414.5,748.1 1414.0,747.6 1413.5,747.2 1413.0,746.7 1412.5,746.3 1412.0,745.8 1411.5,745.4 1411.0,744.9 1410.5,744.5 1410.0,744.1 1409.5,744.1 1409.0,744.1 1408.5,744.1" fill="rgba(225,90,90,0.5)"/>
<polygon points="1429.0,751.2 1429.5,750.5 1430.0,750.0 1430.5,750.1 1431.0,750.1 1431.5,750.1 1432.0,750.2 1432.5,750.2 1433.0,750.3 1433.5,750.3 1434.0,750.4 1434.5,750.4 1435.0,751.0 1435.5,751.6 1436.0,752.1 1436.5,752.7 1437.0,753.3 1437.0,752.9 1436.5,752.9 1436.0,752.8 1435.5,752.7 1435.0,752.7 1434.5,752.6 1434.0,752.5 1433.5,752.5 1433.0,752.4 1432.5,752.3 1432.0,752.3 1431.5,752.2 1431.0,752.2 1430.5,752.1 1430.0,752.0 1429.5,752.0 1429.0,751.9" fill="rgba(60,200,60,0.65)"/>
<polygon points="1437.0,753.3 1437.5,753.9 1438.0,754.4 1438.5,755.0 1439.0,755.6 1439.5,756.2 1440.0,756.7 1440.5,757.3 1441.0,757.9 1441.5,758.5 1442.0,759.0 1442.5,759.4 1443.0,758.8 1443.5,758.3 1444.0,757.8 1444.5,757.2 1445.0,756.7 1445.5,756.1 1446.0,755.6 1446.5,755.0 1447.0,754.5 1447.5,753.9 1448.0,753.4 1448.5,753.2 1449.0,752.9 1449.5,752.7 1449.5,752.8 1449.0,752.9 1448.5,752.9 1448.0,753.0 1447.5,753.0 1447.0,753.0 1446.5,753.1 1446.0,753.1 1445.5,753.2 1445.0,753.2 1444.5,753.3 1444.0,753.3 1443.5,753.3 1443.0,753.4 1442.5,753.4 1442.0,753.5 1441.5,753.5 1441.0,753.4 1440.5,753.4 1440.0,753.3 1439.5,753.2 1439.0,753.2 1438.5,753.1 1438.0,753.0 1437.5,753.0 1437.0,752.9" fill="rgba(225,90,90,0.5)"/>
<polygon points="1449.5,752.7 1450.0,752.4 1450.5,752.2 1451.0,751.9 1451.5,751.7 1452.0,751.4 1452.5,751.2 1453.0,750.8 1453.5,750.5 1454.0,750.2 1454.5,749.9 1455.0,749.5 1455.5,749.2 1456.0,748.9 1456.5,748.6 1457.0,748.3 1457.5,747.9 1458.0,747.5 1458.5,747.1 1459.0,746.7 1459.5,746.3 1460.0,745.8 1460.5,745.4 1461.0,745.0 1461.5,744.6 1462.0,744.2 1462.5,743.7 1463.0,743.2 1463.5,742.7 1464.0,742.2 1464.5,741.7 1465.0,741.2 1465.5,740.7 1466.0,740.2 1466.5,739.7 1467.0,739.2 1467.5,738.7 1468.0,738.0 1468.5,737.2 1469.0,736.4 1469.5,735.7 1470.0,734.9 1470.5,734.1 1471.0,733.9 1471.5,734.2 1472.0,734.4 1472.5,734.6 1473.0,734.8 1473.5,735.1 1474.0,735.3 1474.5,735.5 1475.0,735.7 1475.5,736.0 1476.0,736.2 1476.5,736.4 1477.0,736.6 1477.5,736.9 1478.0,737.2 1478.5,737.7 1479.0,738.2 1479.5,738.7 1480.0,739.2 1480.5,739.7 1481.0,740.2 1481.5,740.7 1482.0,741.2 1482.5,741.7 1483.0,742.1 1483.5,742.5 1484.0,742.9 1484.5,743.2 1485.0,743.6 1485.0,743.3 1484.5,743.3 1484.0,743.3 1483.5,743.3 1483.0,743.3 1482.5,743.3 1482.0,743.3 1481.5,743.3 1481.0,743.3 1480.5,743.3 1480.0,743.3 1479.5,743.3 1479.0,743.3 1478.5,743.3 1478.0,743.3 1477.5,743.3 1477.0,743.3 1476.5,743.3 1476.0,743.4 1475.5,743.6 1475.0,743.9 1474.5,744.1 1474.0,744.4 1473.5,744.6 1473.0,744.9 1472.5,745.1 1472.0,745.4 1471.5,745.6 1471.0,745.9 1470.5,746.1 1470.0,746.4 1469.5,746.6 1469.0,746.9 1468.5,747.1 1468.0,747.4 1467.5,747.6 1467.0,747.9 1466.5,748.1 1466.0,748.2 1465.5,748.4 1465.0,748.5 1464.5,748.7 1464.0,748.8 1463.5,749.0 1463.0,749.1 1462.5,749.3 1462.0,749.4 1461.5,749.6 1461.0,749.7 1460.5,749.9 1460.0,750.0 1459.5,750.2 1459.0,750.3 1458.5,750.5 1458.0,750.6 1457.5,750.8 1457.0,750.9 1456.5,751.1 1456.0,751.2 1455.5,751.4 1455.0,751.5 1454.5,751.7 1454.0,751.8 1453.5,752.0 1453.0,752.1 1452.5,752.3 1452.0,752.4 1451.5,752.6 1451.0,752.7 1450.5,752.8 1450.0,752.8 1449.5,752.8" fill="rgba(60,200,60,0.65)"/>
<polygon points="1485.0,743.6 1485.5,744.0 1486.0,744.4 1486.5,744.8 1487.0,744.3 1487.5,743.8 1488.0,743.3 1488.5,742.8 1489.0,742.3 1489.0,742.6 1488.5,742.7 1488.0,742.8 1487.5,742.9 1487.0,743.0 1486.5,743.1 1486.0,743.2 1485.5,743.3 1485.0,743.3" fill="rgba(225,90,90,0.5)"/>
<polygon points="1489.0,742.3 1489.5,741.8 1490.0,741.3 1490.5,740.7 1491.0,740.0 1491.5,739.4 1492.0,738.8 1492.5,738.2 1493.0,737.5 1493.5,736.9 1494.0,736.3 1494.5,735.7 1495.0,735.4 1495.5,735.4 1496.0,735.4 1496.5,735.4 1497.0,735.4 1497.5,735.4 1498.0,735.4 1498.5,735.4 1499.0,735.5 1499.5,735.9 1500.0,736.4 1500.5,736.8 1501.0,737.3 1501.5,737.7 1502.0,738.1 1502.5,738.6 1503.0,739.0 1503.5,739.5 1504.0,739.9 1504.5,740.3 1505.0,740.6 1505.5,740.9 1506.0,741.2 1506.5,741.4 1507.0,741.7 1507.0,741.7 1506.5,741.5 1506.0,741.4 1505.5,741.2 1505.0,741.1 1504.5,740.9 1504.0,740.8 1503.5,740.6 1503.0,740.5 1502.5,740.3 1502.0,740.2 1501.5,740.2 1501.0,740.3 1500.5,740.4 1500.0,740.5 1499.5,740.6 1499.0,740.7 1498.5,740.8 1498.0,740.9 1497.5,741.0 1497.0,741.1 1496.5,741.2 1496.0,741.3 1495.5,741.4 1495.0,741.5 1494.5,741.6 1494.0,741.7 1493.5,741.7 1493.0,741.8 1492.5,741.9 1492.0,742.0 1491.5,742.1 1491.0,742.2 1490.5,742.3 1490.0,742.4 1489.5,742.5 1489.0,742.6" fill="rgba(60,200,60,0.65)"/>
<polygon points="1507.0,741.7 1507.5,742.0 1508.0,742.3 1508.5,742.8 1509.0,743.6 1509.5,744.4 1510.0,745.2 1510.5,746.0 1511.0,746.8 1511.5,747.6 1512.0,748.4 1512.5,749.0 1513.0,749.3 1513.5,749.5 1514.0,749.8 1514.5,750.0 1515.0,750.3 1515.5,750.5 1516.0,750.8 1516.5,751.0 1517.0,751.3 1517.5,751.3 1518.0,751.3 1518.5,751.3 1519.0,751.3 1519.5,751.3 1520.0,751.3 1520.5,751.3 1521.0,751.3 1521.5,751.3 1522.0,751.2 1522.5,750.9 1523.0,750.6 1523.5,750.3 1524.0,750.0 1524.5,749.7 1525.0,749.4 1525.5,749.1 1526.0,748.8 1526.5,748.5 1527.0,748.3 1527.5,748.3 1528.0,748.2 1528.5,748.2 1529.0,748.1 1529.5,748.0 1530.0,748.0 1530.5,747.9 1531.0,747.8 1531.5,747.8 1532.0,747.8 1532.5,747.8 1533.0,747.8 1533.5,747.8 1534.0,747.8 1534.5,747.8 1535.0,748.6 1535.5,750.7 1536.0,752.8 1536.5,754.9 1537.0,757.0 1537.5,757.4 1538.0,756.8 1538.5,756.2 1539.0,755.6 1539.5,755.0 1540.0,754.4 1540.5,753.8 1541.0,753.2 1541.5,752.6 1542.0,752.0 1542.5,751.4 1543.0,750.8 1543.5,750.5 1544.0,750.3 1544.5,750.2 1545.0,750.0 1545.5,749.8 1546.0,749.6 1546.5,749.4 1547.0,749.2 1547.5,749.0 1548.0,748.8 1548.5,748.6 1549.0,748.4 1549.5,748.7 1550.0,749.0 1550.5,749.3 1551.0,749.6 1551.5,749.8 1552.0,750.1 1552.5,750.4 1553.0,750.7 1553.5,751.0 1554.0,751.3 1554.5,751.6 1555.0,751.9 1555.5,752.2 1556.0,752.4 1556.5,752.9 1557.0,753.4 1557.5,753.9 1558.0,754.4 1558.5,754.9 1559.0,755.4 1559.5,755.9 1560.0,756.4 1560.5,756.9 1561.0,757.4 1561.5,757.7 1562.0,757.1 1562.5,756.6 1563.0,756.1 1563.5,755.5 1564.0,755.0 1564.5,754.4 1565.0,753.9 1565.5,753.3 1566.0,752.8 1566.5,752.2 1567.0,751.7 1567.5,751.1 1568.0,750.8 1568.5,751.1 1569.0,751.5 1569.5,751.8 1570.0,752.2 1570.5,752.6 1571.0,752.9 1571.5,753.3 1572.0,753.6 1572.5,754.0 1573.0,754.3 1573.5,754.7 1574.0,754.8 1574.5,754.5 1575.0,754.1 1575.5,753.8 1576.0,753.5 1576.5,753.2 1577.0,752.9 1577.5,752.5 1578.0,752.2 1578.5,751.9 1579.0,751.1 1579.5,750.3 1580.0,749.5 1580.0,750.1 1579.5,750.0 1579.0,750.0 1578.5,750.0 1578.0,749.9 1577.5,749.9 1577.0,749.9 1576.5,749.8 1576.0,749.8 1575.5,749.8 1575.0,749.8 1574.5,749.7 1574.0,749.7 1573.5,749.7 1573.0,749.6 1572.5,749.6 1572.0,749.5 1571.5,749.5 1571.0,749.4 1570.5,749.4 1570.0,749.3 1569.5,749.3 1569.0,749.2 1568.5,749.2 1568.0,749.1 1567.5,749.1 1567.0,749.0 1566.5,749.0 1566.0,748.9 1565.5,748.9 1565.0,748.8 1564.5,748.8 1564.0,748.7 1563.5,748.7 1563.0,748.6 1562.5,748.6 1562.0,748.5 1561.5,748.5 1561.0,748.4 1560.5,748.4 1560.0,748.4 1559.5,748.3 1559.0,748.3 1558.5,748.3 1558.0,748.3 1557.5,748.2 1557.0,748.2 1556.5,748.2 1556.0,748.2 1555.5,748.1 1555.0,748.1 1554.5,748.1 1554.0,748.1 1553.5,748.0 1553.0,748.0 1552.5,748.0 1552.0,748.0 1551.5,747.9 1551.0,747.9 1550.5,747.9 1550.0,747.9 1549.5,747.8 1549.0,747.8 1548.5,747.8 1548.0,747.7 1547.5,747.7 1547.0,747.7 1546.5,747.7 1546.0,747.6 1545.5,747.6 1545.0,747.6 1544.5,747.6 1544.0,747.5 1543.5,747.5 1543.0,747.5 1542.5,747.5 1542.0,747.4 1541.5,747.4 1541.0,747.4 1540.5,747.4 1540.0,747.3 1539.5,747.3 1539.0,747.3 1538.5,747.3 1538.0,747.2 1537.5,747.2 1537.0,747.2 1536.5,747.1 1536.0,747.0 1535.5,746.9 1535.0,746.9 1534.5,746.8 1534.0,746.7 1533.5,746.6 1533.0,746.6 1532.5,746.5 1532.0,746.4 1531.5,746.3 1531.0,746.3 1530.5,746.2 1530.0,746.1 1529.5,746.0 1529.0,745.9 1528.5,745.9 1528.0,745.8 1527.5,745.7 1527.0,745.6 1526.5,745.6 1526.0,745.5 1525.5,745.4 1525.0,745.3 1524.5,745.3 1524.0,745.2 1523.5,745.1 1523.0,745.1 1522.5,745.0 1522.0,744.9 1521.5,744.8 1521.0,744.8 1520.5,744.7 1520.0,744.6 1519.5,744.5 1519.0,744.5 1518.5,744.4 1518.0,744.3 1517.5,744.3 1517.0,744.2 1516.5,744.1 1516.0,744.0 1515.5,744.0 1515.0,743.9 1514.5,743.8 1514.0,743.8 1513.5,743.7 1513.0,743.5 1512.5,743.4 1512.0,743.2 1511.5,743.1 1511.0,742.9 1510.5,742.8 1510.0,742.6 1509.5,742.4 1509.0,742.3 1508.5,742.1 1508.0,742.0 1507.5,741.8 1507.0,741.7" fill="rgba(225,90,90,0.5)"/>
<polygon points="1580.0,749.5 1580.5,748.8 1581.0,748.0 1581.5,747.2 1582.0,746.2 1582.5,745.2 1583.0,744.1 1583.5,743.1 1584.0,742.1 1584.5,741.4 1585.0,741.7 1585.5,742.1 1586.0,742.5 1586.5,742.8 1587.0,743.2 1587.5,743.6 1588.0,743.9 1588.5,744.3 1589.0,744.0 1589.5,743.6 1590.0,743.3 1590.5,743.0 1591.0,742.6 1591.5,742.3 1592.0,742.0 1592.5,741.6 1593.0,741.3 1593.5,741.0 1594.0,740.7 1594.5,740.3 1595.0,740.0 1595.5,739.7 1596.0,739.3 1596.5,739.0 1597.0,738.7 1597.5,738.5 1598.0,739.0 1598.5,739.5 1599.0,740.0 1599.5,740.5 1600.0,741.0 1600.5,741.5 1601.0,742.0 1601.5,742.5 1602.0,742.6 1602.5,742.6 1603.0,742.7 1603.5,742.8 1604.0,742.9 1604.5,742.9 1605.0,743.0 1605.5,743.1 1606.0,742.6 1606.5,741.9 1607.0,741.1 1607.5,740.4 1608.0,739.6 1608.5,738.9 1609.0,738.1 1609.5,737.8 1610.0,737.8 1610.5,737.8 1611.0,737.8 1611.5,737.8 1612.0,737.8 1612.5,737.8 1613.0,737.8 1613.5,737.8 1614.0,737.7 1614.5,737.5 1615.0,737.2 1615.5,737.0 1616.0,736.7 1616.5,736.5 1617.0,736.2 1617.5,736.0 1618.0,735.7 1618.5,735.5 1618.5,741.9 1618.0,742.0 1617.5,742.1 1617.0,742.2 1616.5,742.3 1616.0,742.4 1615.5,742.5 1615.0,742.6 1614.5,742.7 1614.0,742.8 1613.5,742.8 1613.0,742.9 1612.5,743.0 1612.0,743.1 1611.5,743.2 1611.0,743.3 1610.5,743.4 1610.0,743.5 1609.5,743.6 1609.0,743.7 1608.5,743.8 1608.0,743.9 1607.5,744.0 1607.0,744.1 1606.5,744.2 1606.0,744.2 1605.5,744.3 1605.0,744.5 1604.5,744.6 1604.0,744.7 1603.5,744.8 1603.0,745.0 1602.5,745.1 1602.0,745.2 1601.5,745.3 1601.0,745.5 1600.5,745.6 1600.0,745.7 1599.5,745.8 1599.0,745.9 1598.5,746.1 1598.0,746.2 1597.5,746.3 1597.0,746.4 1596.5,746.6 1596.0,746.7 1595.5,746.8 1595.0,746.9 1594.5,747.1 1594.0,747.2 1593.5,747.3 1593.0,747.4 1592.5,747.6 1592.0,747.7 1591.5,747.8 1591.0,747.9 1590.5,748.1 1590.0,748.2 1589.5,748.3 1589.0,748.4 1588.5,748.6 1588.0,748.7 1587.5,748.8 1587.0,749.0 1586.5,749.1 1586.0,749.2 1585.5,749.3 1585.0,749.5 1584.5,749.6 1584.0,749.7 1583.5,749.8 1583.0,750.0 1582.5,750.1 1582.0,750.2 1581.5,750.2 1581.0,750.1 1580.5,750.1 1580.0,750.1" fill="rgba(60,200,60,0.65)"/>
<path d="M982.5,747.5V729.8M985.5,747.5V734.2M988.5,747.5V738.5M991.5,747.5V728.5M994.5,747.5V731.2M997.5,747.5V733.9M1000.5,747.5V735.8M1003.5,747.5V736.8M1006.5,747.5V738.0M1009.5,747.5V740.6M1012.5,747.5V746.6M1073.5,747.5V744.8M1076.5,747.5V740.2M1079.5,747.5V735.9M1082.5,747.5V735.5M1085.5,747.5V745.1M1100.5,747.5V745.3M1103.5,747.5V741.8M1106.5,747.5V738.8M1109.5,747.5V735.6M1112.5,747.5V734.0M1115.5,747.5V732.7M1118.5,747.5V731.6M1121.5,747.5V728.4M1124.5,747.5V723.5M1127.5,747.5V725.1M1130.5,747.5V727.1M1133.5,747.5V731.4M1136.5,747.5V735.7M1139.5,747.5V735.9M1142.5,747.5V736.0M1145.5,747.5V737.7M1148.5,747.5V739.6M1151.5,747.5V741.3M1154.5,747.5V742.8M1157.5,747.5V743.9M1160.5,747.5V744.1M1163.5,747.5V744.2M1166.5,747.5V744.9M1169.5,747.5V746.7M1178.5,747.5V746.8M1181.5,747.5V745.5M1184.5,747.5V744.1M1187.5,747.5V743.1M1190.5,747.5V742.9M1193.5,747.5V742.7M1196.5,747.5V742.5M1199.5,747.5V742.5M1202.5,747.5V743.1M1205.5,747.5V741.2M1208.5,747.5V738.4M1211.5,747.5V736.4M1214.5,747.5V735.1M1217.5,747.5V734.1M1220.5,747.5V733.4M1223.5,747.5V738.8M1226.5,747.5V743.8M1241.5,747.5V743.9M1244.5,747.5V740.3M1247.5,747.5V739.2M1250.5,747.5V742.5M1256.5,747.5V743.3M1259.5,747.5V738.9M1262.5,747.5V737.2M1265.5,747.5V735.4M1268.5,747.5V735.8M1271.5,747.5V738.5M1274.5,747.5V735.7M1277.5,747.5V737.7M1280.5,747.5V743.7M1332.5,747.5V745.5M1335.5,747.5V743.0M1338.5,747.5V737.5M1341.5,747.5V731.6M1344.5,747.5V730.2M1347.5,747.5V733.6M1350.5,747.5V738.9M1353.5,747.5V739.4M1356.5,747.5V737.5M1359.5,747.5V734.6M1362.5,747.5V731.7M1365.5,747.5V737.2M1368.5,747.5V743.4M1374.5,747.5V745.9M1383.5,747.5V746.7M1389.5,747.5V745.9M1392.5,747.5V741.9M1395.5,747.5V740.0M1398.5,747.5V741.9M1401.5,747.5V739.8M1404.5,747.5V742.8M1407.5,747.5V746.3M1431.5,747.5V745.4M1434.5,747.5V745.3M1452.5,747.5V746.5M1455.5,747.5V745.5M1458.5,747.5V744.4M1461.5,747.5V742.8M1464.5,747.5V740.9M1467.5,747.5V738.8M1470.5,747.5V736.0M1473.5,747.5V737.4M1476.5,747.5V740.3M1479.5,747.5V742.4M1482.5,747.5V745.4M1491.5,747.5V745.3M1494.5,747.5V742.1M1497.5,747.5V741.8M1500.5,747.5V743.4M1503.5,747.5V746.1M1582.5,747.5V743.5M1585.5,747.5V739.8M1588.5,747.5V742.7M1591.5,747.5V742.2M1594.5,747.5V741.0M1597.5,747.5V739.7M1600.5,747.5V742.8M1603.5,747.5V745.3M1606.5,747.5V745.9M1609.5,747.5V741.9M1612.5,747.5V742.2M1615.5,747.5V742.2M1618.5,747.5V741.2" stroke="#3ccb3c" stroke-width="2" fill="none"/>
<path d="M1015.5,748V754.2M1018.5,748V765.4M1021.5,748V776.5M1024.5,748V786.8M1027.5,748V777.8M1030.5,748V772.6M1033.5,748V777.4M1036.5,748V787.2M1039.5,748V784.7M1042.5,748V775.0M1046.5,748V779.6M1049.5,748V786.1M1052.5,748V791.1M1055.5,748V794.0M1058.5,748V776.7M1061.5,748V760.9M1064.5,748V752.4M1070.5,748V749.3M1091.5,748V752.7M1094.5,748V758.2M1097.5,748V753.2M1172.5,748V749.0M1175.5,748V748.7M1232.5,748V749.8M1235.5,748V751.2M1253.5,748V748.8M1283.5,748V755.6M1286.5,748V764.9M1290.5,748V772.7M1293.5,748V761.8M1296.5,748V750.1M1299.5,748V754.7M1302.5,748V759.4M1305.5,748V762.8M1308.5,748V778.1M1311.5,748V796.0M1314.5,748V792.8M1317.5,748V784.4M1320.5,748V775.6M1323.5,748V770.9M1326.5,748V762.9M1329.5,748V753.9M1371.5,748V749.4M1377.5,748V748.7M1386.5,748V749.9M1410.5,748V752.8M1413.5,748V759.0M1416.5,748V765.1M1419.5,748V760.3M1422.5,748V756.2M1425.5,748V752.8M1428.5,748V748.7M1440.5,748V751.4M1443.5,748V753.5M1446.5,748V750.4M1509.5,748V749.3M1512.5,748V753.2M1515.5,748V754.4M1518.5,748V755.0M1521.5,748V754.5M1524.5,748V752.8M1527.5,748V750.7M1530.5,748V749.9M1533.5,748V749.2M1537.5,748V757.8M1540.5,748V755.1M1543.5,748V751.3M1546.5,748V749.9M1549.5,748V748.6M1552.5,748V750.2M1555.5,748V751.8M1558.5,748V754.1M1561.5,748V757.0M1564.5,748V754.2M1567.5,748V750.7M1570.5,748V750.9M1573.5,748V752.7M1576.5,748V751.7M1579.5,748V749.1" stroke="#e06060" stroke-width="2" fill="none"/>
<line x1="904" y1="747.5" x2="1628" y2="747.5" stroke="#2a2ae0" stroke-width="1.2"/>
<polyline points="979.0,737.0 989.2,731.5 1000.3,722.8 1008.1,719.7 1014.4,719.7 1022.3,728.3 1033.3,740.9 1050.6,778.7 1058.5,786.5 1066.3,789.7 1077.4,783.4 1086.8,781.0 1093.1,781.8 1101.0,783.4 1108.8,780.3 1119.4,770.8 1128.9,761.4 1141.5,754.3 1154.1,750.4 1165.1,748.8 1172.9,747.2 1185.5,748.0 1198.1,745.6 1210.7,740.1 1220.2,734.6 1229.6,733.8 1240.6,733.8 1248.5,731.5 1257.9,730.7 1267.4,725.2 1276.8,720.5 1281.5,720.5 1291.0,729.1 1297.3,730.7 1305.1,736.2 1311.0,744.8 1320.5,762.2 1331.5,764.5 1342.5,758.2 1353.5,752.7 1362.9,749.6 1370.8,747.2 1388.1,747.2 1394.4,746.4 1403.9,744.1 1410.1,744.1 1419.6,752.7 1429.0,751.9 1441.6,753.5 1451.1,752.7 1466.8,748.0 1476.2,743.3 1485.7,743.3 1501.8,740.1 1513.6,743.7 1525.4,745.4 1537.2,747.2 1549.0,747.8 1560.8,748.4 1572.6,749.6 1582.1,750.2 1593.9,747.2 1605.7,744.3 1618.6,741.9" fill="none" stroke="#e07070" stroke-width="1"/>
<polyline points="934.2,720.5 940.5,733.8 946.8,783.4 952.3,772.4 958.6,772.4 967.2,730.7 970.4,729.1 973.5,720.5 976.6,719.7 979.8,715.7 988.5,723.6 990.0,711.0 997.1,711.8 1001.8,711.0 1008.1,711.0 1014.4,723.6 1018.3,742.5 1023.9,769.2 1028.6,760.6 1031.7,763.0 1036.4,788.1 1039.6,790.5 1042.7,785.8 1049.0,813.3 1054.5,831.4 1061.6,797.6 1066.3,788.9 1070.3,788.9 1077.4,774.0 1081.3,767.7 1084.4,778.7 1088.4,781.0 1094.7,793.6 1099.4,781.8 1105.7,773.2 1110.4,766.1 1113.9,761.4 1119.4,754.3 1124.2,741.7 1129.7,740.1 1136.0,745.6 1142.3,742.5 1149.3,744.8 1157.2,746.4 1165.1,745.6 1172.9,748.8 1179.2,746.4 1187.1,743.3 1195.0,741.2 1202.8,739.3 1209.1,730.7 1215.4,724.4 1220.2,720.5 1224.9,729.1 1229.6,734.6 1235.1,737.0 1240.6,730.7 1245.3,723.6 1248.5,723.6 1253.2,732.3 1257.9,722.8 1266.6,712.6 1272.1,714.9 1275.2,707.1 1280.7,718.1 1284.7,737.8 1290.2,753.5 1296.5,730.7 1300.0,741.7 1305.5,751.9 1311.0,792.8 1314.2,795.2 1323.6,785.0 1331.5,762.9 1335.4,757.4 1340.9,743.3 1344.8,739.3 1350.4,746.4 1354.3,744.1 1362.2,733.8 1370.8,748.8 1374.0,745.6 1377.1,748.0 1381.0,746.4 1383.4,746.4 1386.5,749.6 1391.3,741.7 1395.2,738.6 1398.3,740.1 1401.5,736.5 1408.6,744.8 1416.4,767.7 1425.9,755.9 1429.8,750.0 1434.5,750.4 1442.4,759.5 1447.9,753.5 1452.6,751.1 1457.4,748.0 1462.1,744.1 1467.6,738.6 1470.7,733.8 1477.8,737.0 1482.5,741.7 1486.5,744.8 1490.0,741.3 1494.7,735.4 1498.9,735.4 1504.2,740.1 1508.3,742.5 1512.4,749.0 1517.1,751.3 1521.9,751.3 1526.6,748.4 1531.3,747.8 1534.8,747.8 1537.2,757.8 1543.1,750.7 1549.0,748.4 1556.1,752.5 1561.4,757.8 1567.9,750.7 1573.8,754.9 1578.5,751.9 1581.5,747.2 1584.4,741.3 1588.5,744.3 1597.4,738.4 1601.5,742.5 1605.7,743.1 1609.2,737.8 1613.9,737.8 1618.6,735.4" fill="none" stroke="#2c2ce6" stroke-width="1.15" stroke-linejoin="round"/>
</g>
</svg>
<div style="position:absolute;left:4px;top:59px;width:157px;height:17px;border:1px solid #a6a6a6;border-top:none;background:linear-gradient(#fafafa,#dadada)"></div>
<div style="position:absolute;left:8px;top:62px;font-size:11px;font-weight:bold;color:#000;white-space:nowrap;line-height:1;">Point and Figure (1 3)</div>
<svg style="left:127px;top:59px" width="14" height="14" viewBox="0 0 14 14"><path d="M5.2,1.3 Q5.2,0.3 6.6,0.3 L9.4,0.3 L9.4,3.7 L12.3,3.7 L12.6,6.6 Q12.6,7.6 11.3,7.6 L7.6,7.6 L2.1,12.3 Q1,13 0.5,11.8 L0.5,10.8 L5.2,5.5 Z" fill="#fff" stroke="#000" stroke-width="1.3" stroke-linejoin="round" transform="translate(0.3,0.3)"/></svg>
<svg style="left:144px;top:60px" width="14" height="14" viewBox="0 0 14 14"><defs><linearGradient id="cg14460" x1="0" y1="0" x2="0" y2="1"><stop offset="0" stop-color="#6a6a6a"/><stop offset="1" stop-color="#1a1a1a"/></linearGradient></defs><circle cx="6.6" cy="6.6" r="6.3" fill="url(#cg14460)"/><path d="M4.2,4.2L9,9M9,4.2L4.2,9" stroke="#fff" stroke-width="2"/></svg>
<div style="position:absolute;left:903px;top:59px;width:85px;height:17px;border:1px solid #a6a6a6;border-top:none;background:linear-gradient(#fafafa,#dadada)"></div>
<div style="position:absolute;left:907px;top:62px;font-size:11px;font-weight:bold;color:#000;white-space:nowrap;line-height:1;">Kurs</div>
<svg style="left:937px;top:59px" width="14" height="14" viewBox="0 0 14 14"><path d="M5.2,1.3 Q5.2,0.3 6.6,0.3 L9.4,0.3 L9.4,3.7 L12.3,3.7 L12.6,6.6 Q12.6,7.6 11.3,7.6 L7.6,7.6 L2.1,12.3 Q1,13 0.5,11.8 L0.5,10.8 L5.2,5.5 Z" fill="#fff" stroke="#000" stroke-width="1.3" stroke-linejoin="round" transform="translate(0.3,0.3)"/></svg>
<svg style="left:954px;top:61px" width="14" height="13" viewBox="0 0 14 13"><rect x="0.8" y="0.8" width="12.4" height="11.4" rx="1.5" fill="#fff" stroke="#000" stroke-width="1.4"/><rect x="0.8" y="0.8" width="12.4" height="3.2" fill="#000"/></svg>
<svg style="left:971px;top:60px" width="14" height="14" viewBox="0 0 14 14"><defs><linearGradient id="cg97160" x1="0" y1="0" x2="0" y2="1"><stop offset="0" stop-color="#6a6a6a"/><stop offset="1" stop-color="#1a1a1a"/></linearGradient></defs><circle cx="6.6" cy="6.6" r="6.3" fill="url(#cg97160)"/><path d="M4.2,4.2L9,9M9,4.2L4.2,9" stroke="#fff" stroke-width="2"/></svg>
<div style="position:absolute;left:903px;top:694px;width:139px;height:17px;border:1px solid #a6a6a6;border-top:none;background:linear-gradient(#fafafa,#dadada)"></div>
<div style="position:absolute;left:907px;top:697px;font-size:11px;font-weight:bold;color:#000;white-space:nowrap;line-height:1;">MACD (3 10 16)</div>
<svg style="left:990px;top:695px" width="14" height="14" viewBox="0 0 14 14"><path d="M5.2,1.3 Q5.2,0.3 6.6,0.3 L9.4,0.3 L9.4,3.7 L12.3,3.7 L12.6,6.6 Q12.6,7.6 11.3,7.6 L7.6,7.6 L2.1,12.3 Q1,13 0.5,11.8 L0.5,10.8 L5.2,5.5 Z" fill="#fff" stroke="#000" stroke-width="1.3" stroke-linejoin="round" transform="translate(0.3,0.3)"/></svg>
<svg style="left:1008px;top:697px" width="14" height="13" viewBox="0 0 14 13"><rect x="0.8" y="0.8" width="12.4" height="11.4" rx="1.5" fill="#fff" stroke="#000" stroke-width="1.4"/><rect x="0.8" y="0.8" width="12.4" height="3.2" fill="#000"/></svg>
<svg style="left:1025px;top:696px" width="14" height="14" viewBox="0 0 14 14"><defs><linearGradient id="cg1025696" x1="0" y1="0" x2="0" y2="1"><stop offset="0" stop-color="#6a6a6a"/><stop offset="1" stop-color="#1a1a1a"/></linearGradient></defs><circle cx="6.6" cy="6.6" r="6.3" fill="url(#cg1025696)"/><path d="M4.2,4.2L9,9M9,4.2L4.2,9" stroke="#fff" stroke-width="2"/></svg>
<div style="position:absolute;left:7px;top:828px;font-size:11px;letter-spacing:-0.2px;color:#000;white-space:nowrap;line-height:1">© ProRealTime.com&nbsp; <i>Daten sind End-of-Day</i></div>
<div style="position:absolute;left:906px;top:678px;font-size:11px;letter-spacing:-0.2px;color:#000;white-space:nowrap;line-height:1">© ProRealTime.com&nbsp; <i>Daten sind End-of-Day</i></div>
</body></html>
